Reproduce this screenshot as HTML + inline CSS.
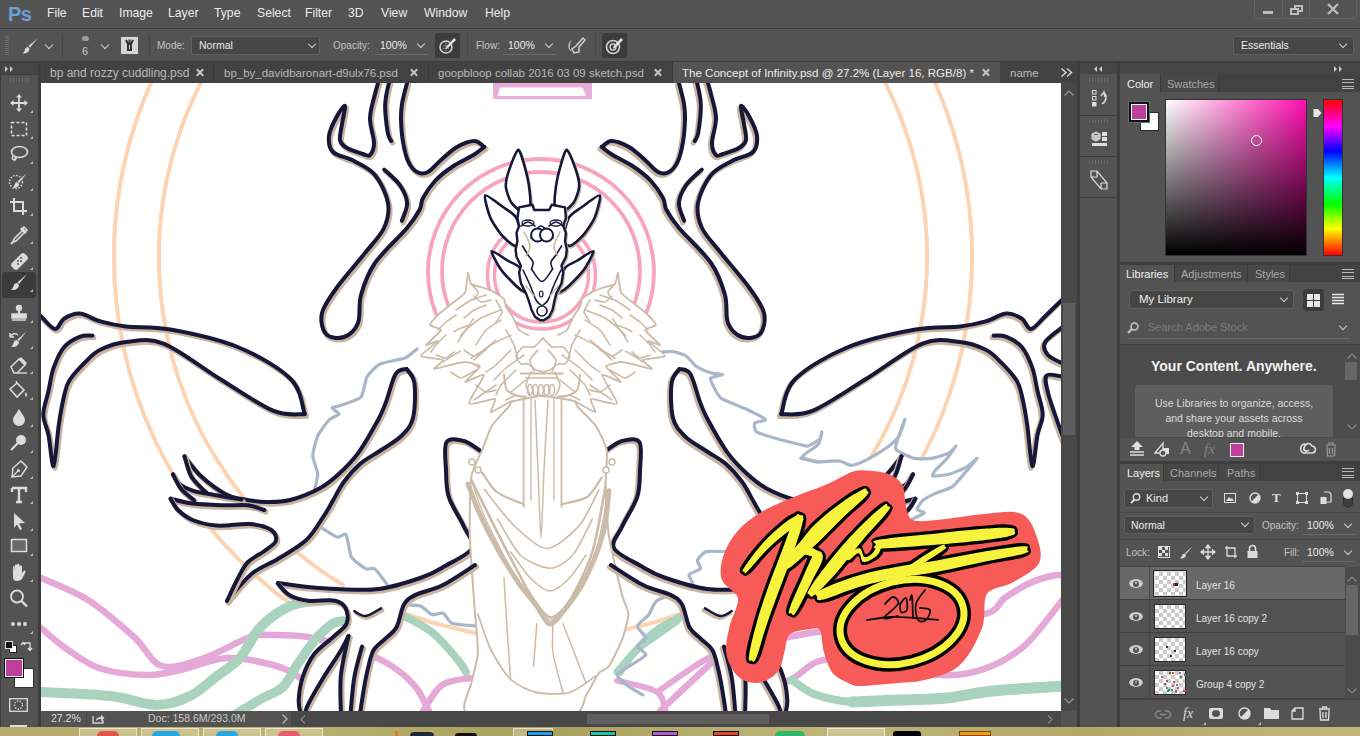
<!DOCTYPE html>
<html><head><meta charset="utf-8">
<style>
*{box-sizing:border-box;margin:0;padding:0}
html,body{width:1360px;height:736px;overflow:hidden;background:#535353;font-family:"Liberation Sans",sans-serif;color:#ddd}
.a{position:absolute}
.t{position:absolute;white-space:nowrap;font-size:12px;line-height:14px}
.menu{font-size:12.2px;color:#ececec;top:6px}
.lbl{position:absolute;white-space:nowrap;font-size:10px;line-height:12px;color:#c4c4c4}
.dd{position:absolute;background:#464646;border:1px solid #5f5f5f;border-radius:2px}
.chev{position:absolute;width:6px;height:6px;border-right:1px solid #cfcfcf;border-bottom:1px solid #cfcfcf;transform:rotate(45deg)}
.tab{position:absolute;top:66px;white-space:nowrap;font-size:11.5px;line-height:14px;color:#b9b9b9}
.x{position:absolute;top:69px;width:7px;height:7px}
.x:before,.x:after{content:"";position:absolute;left:2.5px;top:-1px;width:2px;height:9px;background:#c4c4c4;transform:rotate(45deg)}
.x:after{transform:rotate(-45deg)}
.ptab{position:absolute;white-space:nowrap;font-size:11px;line-height:14px;color:#a8a8a8}
.ham{position:absolute;width:12px;height:10px;border-top:1.5px solid #bbb;border-bottom:1.5px solid #bbb}
.ham:before{content:"";position:absolute;left:0;right:0;top:2px;height:3px;border-top:1.5px solid #bbb;border-bottom:1.5px solid #bbb}
.row{position:absolute;left:1120px;width:225px;height:33px;border-bottom:1px solid #3f3f3f;background:#535353}
.eyec{position:absolute;left:0;top:0;width:30px;height:32px;border-right:1px solid #454545}
.eye{position:absolute;left:9px;top:12px;width:14px;height:9px;border-radius:50%/50%;background:#d0d0d0;clip-path:ellipse(7px 4.5px at 50% 50%)}
.eye:after{content:"";position:absolute;left:4px;top:1.5px;width:6px;height:6px;border-radius:50%;background:#535353}
.eye:before{content:"";position:absolute;left:6px;top:2.5px;width:2px;height:2px;border-radius:50%;background:#d0d0d0;z-index:2}
.thumb{position:absolute;left:34px;top:4px;width:32px;height:25px;border:1px solid #2a2a2a;
background-color:#fff;background-image:linear-gradient(45deg,#cbcbcb 25%,transparent 25%,transparent 75%,#cbcbcb 75%),linear-gradient(45deg,#cbcbcb 25%,transparent 25%,transparent 75%,#cbcbcb 75%);background-size:8px 8px;background-position:0 0,4px 4px}
.lname{position:absolute;left:76px;top:13px;font-size:10px;line-height:12px;color:#e4e4e4;white-space:nowrap}
.grip{position:absolute;height:6px;background:repeating-linear-gradient(90deg,#6a6a6a 0 1px,transparent 1px 3px)}
.tri{position:absolute;width:0;height:0;border-left:3px solid transparent;border-bottom:3px solid #bbb}
svg.i{position:absolute;overflow:visible}
</style></head><body>

<!-- ================= MENU BAR ================= -->
<div class="t" style="left:8px;top:3px;font-size:20px;line-height:22px;font-weight:bold;color:#6aa1d8;letter-spacing:-0.5px">Ps</div>
<div class="t menu" style="left:47px">File</div>
<div class="t menu" style="left:82px">Edit</div>
<div class="t menu" style="left:119px">Image</div>
<div class="t menu" style="left:168px">Layer</div>
<div class="t menu" style="left:214px">Type</div>
<div class="t menu" style="left:257px">Select</div>
<div class="t menu" style="left:305px">Filter</div>
<div class="t menu" style="left:348px">3D</div>
<div class="t menu" style="left:381px">View</div>
<div class="t menu" style="left:424px">Window</div>
<div class="t menu" style="left:485px">Help</div>
<div class="a" style="left:1254px;top:-4px;width:103px;height:23px;border:1px solid #626262;border-radius:4px"></div>
<div class="a" style="left:1282px;top:0;width:1px;height:18px;background:#626262"></div>
<div class="a" style="left:1309px;top:0;width:1px;height:18px;background:#626262"></div>
<div class="a" style="left:1263px;top:11px;width:10px;height:3px;background:#bcbcbc"></div>
<div class="a" style="left:1294px;top:5px;width:9px;height:7px;border:2px solid #bcbcbc"></div>
<div class="a" style="left:1290px;top:8px;width:9px;height:7px;border:2px solid #bcbcbc;background:#535353"></div>
<svg class="i" style="left:1327px;top:4px" width="12" height="10"><path d="M1 0 L11 10 M11 0 L1 10" stroke="#bcbcbc" stroke-width="2.4"/></svg>

<!-- ================= OPTIONS BAR ================= -->
<div class="a" style="left:0;top:28px;width:1360px;height:1px;background:#3c3c3c"></div>
<div class="a" style="left:1px;top:29px;width:1359px;height:33px;background:#535353;border-top:1px solid #5c5c5c"></div>
<div class="a" style="left:0;top:61px;width:1360px;height:1px;background:#3c3c3c"></div>
<div class="grip" style="left:5px;top:36px;width:4px;height:19px;background:repeating-linear-gradient(180deg,#6b6b6b 0 1px,transparent 1px 2px)"></div>
<svg class="i" style="left:21px;top:37px" width="18" height="18"><path d="M16.5 1.5 L9 10.5 L7.5 9 Z" fill="#dcdcdc"/><path d="M7 10 C4.5 10 4 12.5 3.5 14 C3 15.5 2 16 1.5 16.5 C4 17 7.5 16 8.5 12 Z" fill="#dcdcdc"/></svg>
<div class="chev" style="left:46px;top:42px"></div>
<div class="a" style="left:62px;top:34px;width:1px;height:24px;background:#474747"></div>
<div class="a" style="left:82px;top:36px;width:7px;height:5px;border-radius:3px;background:#9a9a9a"></div>
<div class="t" style="left:82px;top:45px;font-size:11px;line-height:12px;color:#c8c8c8">6</div>
<div class="chev" style="left:102px;top:42px"></div>
<div class="a" style="left:121px;top:37px;width:17px;height:17px;background:#d6d6d6"></div>
<svg class="i" style="left:121px;top:37px" width="17" height="17"><path d="M7 6 L7 13 L10 13 L10 6 M5 3 L7.5 8 M12 3 L9.5 8 M8.5 2.5 L8.5 8" stroke="#333" stroke-width="2" fill="none"/></svg>
<div class="a" style="left:149px;top:35px;width:1px;height:22px;background:#474747"></div>
<div class="lbl" style="left:157px;top:40px">Mode:</div>
<div class="dd" style="left:191px;top:36px;width:129px;height:19px"></div>
<div class="t" style="left:199px;top:39px;font-size:10.5px;line-height:12px;color:#e8e8e8">Normal</div>
<div class="chev" style="left:309px;top:41px"></div>
<div class="lbl" style="left:333px;top:40px">Opacity:</div>
<div class="t" style="left:380px;top:39px;font-size:10.5px;line-height:12px;color:#ececec">100%</div>
<div class="a" style="left:375px;top:54px;width:53px;height:1px;background:#6a6a6a"></div>
<div class="chev" style="left:418px;top:41px"></div>
<div class="a" style="left:435px;top:33px;width:25px;height:25px;background:#3c3c3c;border-radius:2px"></div>
<svg class="i" style="left:438px;top:36px" width="19" height="19"><circle cx="8" cy="11" r="6" stroke="#d0d0d0" stroke-width="1.6" fill="none"/><path d="M5 10 L11 10 M5 12.5 L11 12.5 M8 6 L8 16" stroke="#999" stroke-width="0.8"/><path d="M16 2 L18 4 L10 12 L8 12.5 L8.5 10.5 Z" fill="#e0e0e0"/></svg>
<div class="a" style="left:467px;top:34px;width:1px;height:23px;background:#474747"></div>
<div class="lbl" style="left:476px;top:40px">Flow:</div>
<div class="t" style="left:508px;top:39px;font-size:10.5px;line-height:12px;color:#ececec">100%</div>
<div class="a" style="left:503px;top:54px;width:53px;height:1px;background:#6a6a6a"></div>
<div class="chev" style="left:546px;top:41px"></div>
<svg class="i" style="left:566px;top:37px" width="20" height="18"><path d="M6 3 C1 5 1 13 6 15 C3 12 3 6 6 3Z" fill="#bdbdbd"/><path d="M17 1 L19 3 L13 10 L13 15 L8 16 L6 12 L10 9 Z" stroke="#d0d0d0" stroke-width="1.5" fill="none"/></svg>
<div class="a" style="left:595px;top:34px;width:1px;height:23px;background:#474747"></div>
<div class="a" style="left:602px;top:33px;width:25px;height:25px;background:#3c3c3c;border-radius:2px"></div>
<svg class="i" style="left:605px;top:36px" width="19" height="19"><circle cx="8" cy="11" r="6.5" stroke="#d0d0d0" stroke-width="1.6" fill="none"/><circle cx="8" cy="11" r="3" stroke="#d0d0d0" stroke-width="1.4" fill="none"/><path d="M16 2 L18 4 L10 12 L8 12.5 L8.5 10.5 Z" fill="#e0e0e0"/></svg>
<div class="dd" style="left:1233px;top:36px;width:121px;height:19px"></div>
<div class="t" style="left:1241px;top:39px;font-size:10.5px;line-height:12px;color:#ececec">Essentials</div>
<div class="chev" style="left:1340px;top:41px"></div>

<!-- ================= LEFT TOOLBAR ================= -->
<div class="a" style="left:0;top:62px;width:41px;height:665px;background:#3d3d3d"></div>
<div class="a" style="left:1px;top:63px;width:37px;height:11px;background:#454545"></div>
<svg class="i" style="left:5px;top:66px" width="10" height="6"><path d="M0 0 L3 3 L0 6 Z M5 0 L8 3 L5 6Z" fill="#ccc"/></svg>
<div class="a" style="left:1px;top:75px;width:37px;height:652px;background:#535353"></div>
<div class="grip" style="left:10px;top:78px;width:19px;height:4px"></div>
<div class="a" style="left:2px;top:272px;width:34px;height:26px;background:#3a3a3a;border-radius:3px"></div>
<svg class="i" style="left:7px;top:93px" width="24" height="20"><path d="M12 2 V18 M4 10 H20" stroke="#dcdcdc" stroke-width="1.8"/><path d="M12 1 L9 4.5 H15Z M12 19 L9 15.5 H15Z M3 10 L6.5 7 V13Z M21 10 L17.5 7 V13Z" fill="#dcdcdc"/></svg>
<div class="tri" style="left:30px;top:110px"></div>
<svg class="i" style="left:7px;top:119px" width="24" height="20"><rect x="4.5" y="3.5" width="15" height="13" stroke="#dcdcdc" stroke-width="1.6" stroke-dasharray="3 2" fill="none"/></svg>
<div class="tri" style="left:30px;top:136px"></div>
<svg class="i" style="left:7px;top:144px" width="24" height="20"><ellipse cx="12.5" cy="8" rx="8" ry="5.5" stroke="#dcdcdc" stroke-width="1.6" fill="none"/><path d="M6 12 C4 15 7 17 9 15 C10 13 7 13 8 17" stroke="#dcdcdc" stroke-width="1.4" fill="none"/></svg>
<div class="tri" style="left:30px;top:161px"></div>
<svg class="i" style="left:7px;top:171px" width="24" height="20"><circle cx="9" cy="11" r="6.5" stroke="#dcdcdc" stroke-width="1.4" stroke-dasharray="1.5 1.5" fill="none"/><path d="M20 2 L12 12 L10.5 10.5Z" fill="#dcdcdc"/><path d="M10 11 C7 12 8 15 6 17 C10 17 12 15 12 13Z" fill="#dcdcdc"/></svg>
<div class="tri" style="left:30px;top:188px"></div>
<svg class="i" style="left:7px;top:196px" width="24" height="20"><path d="M7 2 V15 H20 M3 6 H16 V19" stroke="#dcdcdc" stroke-width="2" fill="none"/></svg>
<div class="tri" style="left:30px;top:213px"></div>
<svg class="i" style="left:7px;top:224px" width="24" height="20"><path d="M17 3 L20 6 L17 9 L9 17 L6 18 L7 15 L15 7Z" stroke="#dcdcdc" stroke-width="1.6" fill="none"/><path d="M15 3 L20 8 L18 10 L13 5Z" fill="#dcdcdc"/><path d="M6 18 L4 20" stroke="#dcdcdc" stroke-width="1.8"/></svg>
<div class="tri" style="left:30px;top:241px"></div>
<svg class="i" style="left:7px;top:250px" width="24" height="20"><path d="M5 13 L14 4 Q16 2 18 4 L20 6 Q22 8 20 10 L11 19 Q9 21 7 19 L5 17 Q3 15 5 13Z" fill="#dcdcdc"/><circle cx="11" cy="11" r="1" fill="#535353"/><circle cx="14" cy="11" r="1" fill="#535353"/><circle cx="11" cy="14" r="1" fill="#535353"/><circle cx="14" cy="8" r="1" fill="#535353"/></svg>
<div class="tri" style="left:30px;top:267px"></div>
<svg class="i" style="left:7px;top:272px" width="24" height="20"><path d="M20 2 L12 12 L10.5 10.5Z" fill="#dcdcdc"/><path d="M10 11 C6 11 7 16 4 18 C9 18.5 12 16 12 13Z" fill="#dcdcdc"/></svg>
<div class="tri" style="left:30px;top:289px"></div>
<svg class="i" style="left:7px;top:303px" width="24" height="20"><circle cx="12" cy="5" r="3.2" fill="#dcdcdc"/><path d="M11 7 V11 H13 V7" fill="#dcdcdc"/><path d="M5 11 H19 V15 H5Z M5 17 H19" stroke="#dcdcdc" stroke-width="1.6" fill="#dcdcdc"/></svg>
<div class="tri" style="left:30px;top:320px"></div>
<svg class="i" style="left:7px;top:329px" width="24" height="20"><path d="M20 2 L12 12 L10.5 10.5Z" fill="#dcdcdc"/><path d="M10 11 C6 11 7 16 4 18 C9 18.5 12 16 12 13Z" fill="#dcdcdc"/><path d="M3 8 C5 4 9 4 11 6 M3 8 L3 4 M3 8 L7 8" stroke="#dcdcdc" stroke-width="1.4" fill="none"/></svg>
<div class="tri" style="left:30px;top:346px"></div>
<svg class="i" style="left:7px;top:354px" width="24" height="20"><path d="M4 13 L12 5 L18 11 L10 19 L7 19Z" stroke="#dcdcdc" stroke-width="1.5" fill="none"/><path d="M12 5 L14 3 L20 9 L18 11Z" fill="#dcdcdc"/><path d="M10 19 H20" stroke="#dcdcdc" stroke-width="1.4"/></svg>
<div class="tri" style="left:30px;top:371px"></div>
<svg class="i" style="left:7px;top:380px" width="24" height="20"><path d="M3 9 L10 3 L17 10 L10 17Z" stroke="#dcdcdc" stroke-width="1.6" fill="none"/><path d="M10 3 L9 1" stroke="#dcdcdc" stroke-width="1.4"/><path d="M19 12 Q21 15 19 17 Q17 15 19 12Z" fill="#dcdcdc"/></svg>
<div class="tri" style="left:30px;top:397px"></div>
<svg class="i" style="left:7px;top:407px" width="24" height="20"><path d="M12 2 C9 7 6 10 6 13 A6 6 0 0 0 18 13 C18 10 15 7 12 2Z" fill="#dcdcdc"/></svg>
<div class="tri" style="left:30px;top:424px"></div>
<svg class="i" style="left:7px;top:433px" width="24" height="20"><circle cx="14" cy="7" r="5" fill="#dcdcdc"/><path d="M11 10 L4 17" stroke="#dcdcdc" stroke-width="2.2"/></svg>
<div class="tri" style="left:30px;top:450px"></div>
<svg class="i" style="left:7px;top:459px" width="24" height="20"><path d="M14 2 L20 8 L14 17 L5 18 L6 9Z" stroke="#dcdcdc" stroke-width="1.5" fill="none"/><path d="M5 18 L11 12" stroke="#dcdcdc" stroke-width="1.2"/><circle cx="11.5" cy="11.5" r="1.5" fill="#dcdcdc"/></svg>
<div class="tri" style="left:30px;top:476px"></div>
<svg class="i" style="left:7px;top:484px" width="24" height="20"><path d="M5 4 H19 V8 M5 4 V8 M12 4 V18 M9 18 H15" stroke="#dcdcdc" stroke-width="2.4" fill="none"/></svg>
<div class="tri" style="left:30px;top:501px"></div>
<svg class="i" style="left:7px;top:511px" width="24" height="20"><path d="M7 2 L18 12 L12 12.5 L15 18 L13 19 L10 13.5 L7 17Z" fill="#dcdcdc"/></svg>
<div class="tri" style="left:30px;top:528px"></div>
<svg class="i" style="left:7px;top:536px" width="24" height="20"><rect x="4.5" y="3.5" width="15" height="12" stroke="#dcdcdc" stroke-width="1.5" fill="#6a6a6a"/></svg>
<div class="tri" style="left:30px;top:553px"></div>
<svg class="i" style="left:7px;top:562px" width="24" height="20"><path d="M6 10 V5 Q6 3.5 7.5 4 L8 9 V3 Q9 1.5 10 3 V9 V2.5 Q11.5 1 12.5 2.5 V9 V4 Q14 3 15 4 V11 L17 8.5 Q19 8 18.5 10 L15 17 Q13 19 10 19 Q6 19 6 15Z" fill="#dcdcdc"/></svg>
<div class="tri" style="left:30px;top:579px"></div>
<svg class="i" style="left:7px;top:588px" width="24" height="20"><circle cx="10" cy="8.5" r="6" stroke="#dcdcdc" stroke-width="1.8" fill="none"/><path d="M14.5 13 L20 18.5" stroke="#dcdcdc" stroke-width="2.4"/></svg>
<svg class="i" style="left:7px;top:614px" width="24" height="20"><circle cx="6" cy="10" r="2" fill="#dcdcdc"/><circle cx="12" cy="10" r="2" fill="#dcdcdc"/><circle cx="18" cy="10" r="2" fill="#dcdcdc"/></svg>
<div class="tri" style="left:30px;top:631px"></div>
<div class="a" style="left:9px;top:645px;width:8px;height:8px;background:#fff;border:1px solid #222"></div>
<div class="a" style="left:5px;top:641px;width:8px;height:8px;background:#111;border:1px solid #ddd"></div>
<svg class="i" style="left:20px;top:640px" width="13" height="12"><path d="M3 3 H10 V10 M1 5 L3 2.5 L5 5 M8 8 L10 10.5 L12 8" stroke="#ddd" stroke-width="1.3" fill="none"/></svg>
<div class="a" style="left:14px;top:668px;width:20px;height:20px;background:#fff;border:1px solid #333"></div>
<div class="a" style="left:4px;top:658px;width:20px;height:20px;background:#111;padding:1px"><div style="width:18px;height:18px;background:#bb3f9b;border:1px solid #eee"></div></div>
<svg class="i" style="left:9px;top:698px" width="19" height="14"><rect x="0.7" y="0.7" width="17.6" height="12.6" stroke="#ddd" stroke-width="1.3" fill="none"/><circle cx="9.5" cy="7" r="4" stroke="#ddd" stroke-width="1.3" stroke-dasharray="1.4 1.4" fill="none"/></svg>
<div class="a" style="left:10px;top:725px;width:17px;height:3px;background:#ddd"></div>

<!-- ================= DOCUMENT TABS ================= -->
<div class="a" style="left:41px;top:62px;width:1036px;height:21px;background:#424242"></div>
<div class="a" style="left:213px;top:62px;width:1px;height:21px;background:#393939"></div>
<div class="a" style="left:428px;top:62px;width:1px;height:21px;background:#393939"></div>
<div class="a" style="left:672px;top:62px;width:1px;height:21px;background:#393939"></div>
<div class="a" style="left:673px;top:62px;width:327px;height:21px;background:#535353"></div>
<div class="a" style="left:1040px;top:62px;width:37px;height:21px;background:#424242"></div>
<div class="tab" style="left:50px;font-size:12px">bp and rozzy cuddling.psd</div><div class="x" style="left:196px"></div>
<div class="tab" style="left:224px">bp_by_davidbaronart-d9ulx76.psd</div><div class="x" style="left:410px"></div>
<div class="tab" style="left:438px">goopbloop collab 2016 03 09 sketch.psd</div><div class="x" style="left:654px"></div>
<div class="tab" style="left:682px;color:#ededed;font-size:11.55px">The Concept of Infinity.psd @ 27.2% (Layer 16, RGB/8) *</div><div class="x" style="left:982px"></div>
<div class="a" style="left:1001px;top:62px;width:39px;height:21px;overflow:hidden"><div class="tab" style="left:9px;top:4px">name</div></div>
<svg class="i" style="left:1061px;top:68px" width="12" height="9"><path d="M0.5 0.5 L5 4.5 L0.5 8.5 M6 0.5 L10.5 4.5 L6 8.5" stroke="#d8d8d8" stroke-width="1.4" fill="none"/></svg>

<!-- ================= CANVAS ================= -->
<div class="a" style="left:41px;top:83px;width:1020px;height:628px;background:#fff;overflow:hidden">
<svg id="art" width="1020" height="628" viewBox="41 83 1020 628" style="position:absolute;left:0;top:0" stroke-linecap="round" stroke-linejoin="round">
<path d="M292 605 A429 429 0 1 1 794 605" stroke="#fdd4b3" stroke-width="4" fill="none"/>
<path d="M343 585 A384 384 0 1 1 743 585" stroke="#fdd4b3" stroke-width="4" fill="none"/>
<path d="M400 612 L430 622 L462 630 L475 633" stroke="#fdd4b3" stroke-width="4" fill="none"/>
<path d="M686 612 L656 622 L624 630 L611 633" stroke="#fdd4b3" stroke-width="4" fill="none"/>
<rect x="493" y="80" width="99" height="19" fill="#e8acdb"/>
<path d="M500 87.5 L582.5 87.5 L586 96 L497.5 96Z" stroke="none" stroke-width="0" fill="#fff"/>
<circle cx="541" cy="272" r="113" stroke="#f8a4be" stroke-width="3.8" fill="none"/>
<circle cx="541" cy="271" r="99" stroke="#f8a4be" stroke-width="3.8" fill="none"/>
<circle cx="541.5" cy="275" r="54" stroke="#f8a4be" stroke-width="3.5" fill="none"/>
<circle cx="541.5" cy="275" r="47" stroke="#f8a4be" stroke-width="3.5" fill="none"/>
<path d="M41 578 C48.8 581.7 72.5 590.2 88 600 C103.5 609.8 121.7 626 134 637 C146.3 648 150.3 662.5 162 666 C173.7 669.5 189.3 662.8 204 658 C218.7 653.2 238.5 640.8 250 637 C261.5 633.2 263.3 635 273 635 C282.7 635 295.7 635 308 637 C320.3 639 334.2 642.8 347 647 C359.8 651.2 373.8 655.7 385 662 C396.2 668.3 406.7 676.8 414 685 C421.3 693.2 426.5 706.7 429 711" stroke="#e5a9d9" stroke-width="6.5" fill="none"/>
<path d="M41 628 C44.8 631.2 54.3 640.3 64 647 C73.7 653.7 85.3 663.3 99 668 C112.7 672.7 132.5 674.7 146 675 C159.5 675.3 166.5 672.8 180 670 C193.5 667.2 211.5 658.8 227 658 C242.5 657.2 261 661.8 273 665 C285 668.2 290 671.2 299 677 C308 682.8 321 694.3 327 700 C333 705.7 333.7 709.2 335 711" stroke="#e5a9d9" stroke-width="6.5" fill="none"/>
<path d="M423 711 C426.2 706.7 434.2 690.5 442 685 C449.8 679.5 465.3 679.2 470 678" stroke="#e5a9d9" stroke-width="6.5" fill="none"/>
<path d="M660 711 C667.7 703.8 695 677.8 706 668 C717 658.2 717 656.5 726 652 C735 647.5 749.5 643.5 760 641 C770.5 638.5 778.8 638.6 789 637 C799.2 635.4 802.5 633.6 821 631.6 C839.5 629.6 872.9 627.9 900 625 C927.1 622.1 966.2 618.8 983.6 614.3 C1001 609.8 997.2 603 1004.6 598 C1012 593 1020.1 587.7 1027.8 584 C1035.5 580.3 1045 577.5 1051 576 C1057 574.5 1061.8 575.2 1064 575" stroke="#e5a9d9" stroke-width="6.5" fill="none"/>
<path d="M745 698 C752.5 695 776.8 686.3 790 680 C803.2 673.7 809 662 824 660 C839 658 863.5 665.7 880 668 C896.5 670.3 910.2 672.5 923.2 673.6 C936.2 674.7 946.4 676.1 958 674.8 C969.6 673.4 982.2 670.1 993 665.5 C1003.8 660.9 1014.5 654 1023 647 C1031.5 640 1037.2 631.8 1044 623.6 C1050.8 615.4 1060.7 602.3 1064 598" stroke="#e5a9d9" stroke-width="6.5" fill="none"/>
<path d="M41 692 C52.7 692.7 91.7 693.8 111 696 C130.3 698.2 143.8 705 157 705 C170.2 705 180 700.8 190 696 C200 691.2 208.7 682.3 217 676 C225.3 669.7 233.2 665.7 240 658 C246.8 650.3 251.5 637.7 258 630 C264.5 622.3 272 616.5 279 612 C286 607.5 291.7 605 300 603 C308.3 601 324.2 600.5 329 600" stroke="#a9d2bf" stroke-width="10" fill="none"/>
<path d="M236 714 C240.2 711.5 253.2 703.5 261 699 C268.8 694.5 277 692.7 283 687 C289 681.3 291.7 672.8 297 665 C302.3 657.2 309.2 646.8 315 640 C320.8 633.2 327.3 627.2 332 624 C336.7 620.8 341.2 621.5 343 621" stroke="#a9d2bf" stroke-width="9.5" fill="none"/>
<path d="M395 614 C396.5 614.3 397.7 612.8 404 616 C410.3 619.2 424 625.7 433 633 C442 640.3 452.5 653.5 458 660 C463.5 666.5 464.7 670 466 672" stroke="#a9d2bf" stroke-width="8" fill="none"/>
<path d="M691 614 C689.5 614.3 688.3 612.8 682 616 C675.7 619.2 662 625.7 653 633 C644 640.3 633.5 653.5 628 660 C622.5 666.5 621.3 670 620 672" stroke="#a9d2bf" stroke-width="7.5" fill="none"/>
<path d="M792 680 C795.7 682.3 804 690.3 814 694 C824 697.7 837.7 701 852 702 C866.3 703 892 700.3 900 700" stroke="#a9d2bf" stroke-width="8" fill="none"/>
<path d="M852 702 C860 701.7 884.2 700.7 900 700 C915.8 699.3 931 699.5 946.5 698 C962 696.5 973.4 693 993 691 C1012.6 689 1052.2 686.8 1064 686" stroke="#a9d2bf" stroke-width="11" fill="none"/>
<path d="M677.5 620.5 C674.1 622.9 664.1 630 657.4 634.8 C650.7 639.6 644 643 637.3 649.2 C630.6 655.4 620.6 668.2 617.2 672" stroke="#a9d2bf" stroke-width="7.5" fill="none"/>
<path d="M617.2 680.7 C623.9 682.6 649.3 686.7 657.4 692.2 C665.5 697.8 664.6 710.4 666 714" stroke="#e5a9d9" stroke-width="6" fill="none"/>
<path d="M657.4 692 C662.2 688.7 677.4 677.7 686 672 C694.6 666.3 702.3 661.1 709 657.8 C715.7 654.5 723.2 653 726 652" stroke="#e5a9d9" stroke-width="6" fill="none"/>
<path d="M799 444.2 L807.7 446 L820 438.9 L821.8 431.8 L818.3 444.2 L802.4 456.5 L816.5 461.8 L839.5 461 L851.8 465.4 L869.5 458.3 L889 446 L899.5 435.3 L904.8 419.4 L897.8 438.9 L896 449.5 L913.7 458.3 L931.3 458.3 L949 453 L956 446 L947.2 458.3 L935 470.7 L933 476 L949 474.2 L966.7 467 L977.3 458.3 L966.7 470.7 L952.5 486.6 L934.9 493.6 L922.5 500.7 L917.2 509.5 L924.3 513 L910 520 L980 540 L800 540Z" stroke="none" stroke-width="0" fill="#fff"/>
<path d="M417 349 C415.8 349.9 408.7 356.5 405 358 C401.3 359.5 383.8 362.1 380 364 C376.2 365.9 368.9 373.7 367 377 C365.1 380.3 363.5 394.2 361 397 C358.5 399.8 344.9 403.9 342 405 C339.1 406.1 332.3 407.1 332 408 C331.7 408.9 339.3 412.8 339 414 C338.7 415.2 331.1 417.8 329 420 C326.9 422.2 319.3 432.4 317.7 436 C316.1 439.6 312.8 452.2 312.8 456 C312.8 459.8 317.5 470.4 317.7 473.8 C317.9 477.2 314.8 488.4 314.5 490" stroke="#a9b6c9" stroke-width="3.2" fill="none"/>
<path d="M323 528.7 C324.4 529.6 335 536.6 337.3 537.2 C339.6 537.8 344.6 532.4 346 534.4 C347.4 536.4 349.6 553.9 351.6 557.3 C353.6 560.7 363.7 567.6 366 568.8 C368.3 569.9 372.6 567.4 374.6 568.8 C376.6 570.2 383.5 579.6 386 583 C388.5 586.4 396.6 600.7 400 603 C403.4 605.3 417.2 604.8 420.4 606 C423.6 607.2 429.6 613.9 431.9 614.6 C434.2 615.3 441.3 612.3 443.3 613.2 C445.3 614.1 448.7 621.9 452 623.2 C455.3 624.5 473.6 625.7 476 626" stroke="#a9b6c9" stroke-width="3.2" fill="none"/>
<path d="M648.8 353.3 C651.1 353.1 668.1 351.2 671.8 351.5 C675.5 351.8 683.5 354.5 686 356 C688.5 357.5 694 364.8 696.5 366.5 C699 368.2 708.1 371.9 710.7 372.7 C713.4 373.5 723 374 723 374.5 C723 375 711.6 376.7 710.7 378 C709.8 379.3 713.1 385.7 714.2 387.7 C715.3 389.7 718.1 396.2 721.3 398.3 C724.5 400.4 741.6 406.9 746 409 C750.4 411.1 764.5 418.1 765.4 419.5 C766.3 420.9 755.7 421.8 754.8 423 C753.9 424.2 754.3 430.3 756.6 431.9 C758.9 433.5 773.6 437.8 777.8 439 C782 440.2 796 443.5 799 444.2 C802 444.9 805.6 446.5 807.7 446 C809.8 445.5 818.6 440.3 820 438.9 C821.4 437.5 822 431.3 821.8 431.8 C821.6 432.3 820.2 441.7 818.3 444.2 C816.4 446.7 802.6 454.7 802.4 456.5 C802.2 458.3 812.8 461.4 816.5 461.8 C820.2 462.2 836 460.6 839.5 461 C843 461.4 848.8 465.7 851.8 465.4 C854.8 465.1 865.8 460.2 869.5 458.3 C873.2 456.4 886 448.3 889 446 C892 443.7 897.9 438 899.5 435.3 C901.1 432.6 905 419 904.8 419.4 C904.6 419.8 898.7 435.9 897.8 438.9 C896.9 441.9 894.4 447.6 896 449.5 C897.6 451.4 910.2 457.4 913.7 458.3 C917.2 459.2 927.8 458.8 931.3 458.3 C934.8 457.8 946.5 454.2 949 453 C951.5 451.8 956.2 445.5 956 446 C955.8 446.5 949.3 455.8 947.2 458.3 C945.1 460.8 936.4 468.9 935 470.7 C933.6 472.5 931.6 475.6 933 476 C934.4 476.4 945.6 475.1 949 474.2 C952.4 473.3 963.9 468.6 966.7 467 C969.5 465.4 977.3 457.9 977.3 458.3 C977.3 458.7 969.2 467.9 966.7 470.7 C964.2 473.5 955.7 484.3 952.5 486.6 C949.3 488.9 937.9 492.2 934.9 493.6 C931.9 495 924.3 499.1 922.5 500.7 C920.7 502.3 917 508.3 917.2 509.5 C917.4 510.7 925 511.9 924.3 513 C923.6 514 911.4 519.3 910 520" stroke="#a9b6c9" stroke-width="3.2" fill="none"/>
<path d="M726.2 551.6 C724.2 551.6 708.9 550.7 706 551.6 C703.1 552.5 698.1 558.5 697.5 560.2 C696.9 561.9 701.2 567.4 700.4 568.8 C699.5 570.2 689.9 572.9 689 574.6 C688.1 576.3 695 583.4 691.8 586 C688.6 588.6 661.7 597.5 657.4 600.4 C653.1 603.3 650.8 612.1 648.8 614.7 C646.8 617.3 637.6 623.9 637.3 626.2 C637 628.5 645.9 635.7 645.9 637.7 C645.9 639.7 637.3 644.6 637.3 646.3 C637.3 648 646.8 652.9 645.9 654.9 C645 656.9 631.6 664.4 628.7 666.4 C625.8 668.4 617.2 673 617.2 675 C617.2 677 626.1 684.5 628.7 686.5 C631.3 688.5 641.6 694.1 643 695" stroke="#a9b6c9" stroke-width="3.2" fill="none"/>
<path d="M800.8 458.4 L820 462" stroke="#a9b6c9" stroke-width="3.2" fill="none"/>
<path d="M541 336 L558 335 L567 330 L573.5 316.5 L580 306.7 L582 299 L591 292.6 L602 288 L615 284 L618 273 L621 292.6 L634 303.5 L647 314 L656 325 L645 330 L660 345 L648 341 L665 356 L643 360 L652 369 L632 364 L621 362 L606 366.5 L621 382 L602 375 L617 403.5 L591 399 L595 412 L573.5 401 L560 405 L541 400 L541 440Z" stroke="none" stroke-width="0" fill="#fff"/>
<path d="M558 335 C558.8 334.6 565.7 331.5 567 330 C568.3 328.5 572.4 318.4 573.5 316.5 C574.6 314.6 579.3 308.2 580 306.7 C580.7 305.2 581.1 300.2 582 299 C582.9 297.8 589.3 293.5 591 292.6 C592.7 291.7 600 288.7 602 288 C604 287.3 613.7 285.2 615 284 C616.3 282.8 617.5 272.3 618 273 C618.5 273.7 619.7 290.1 621 292.6 C622.3 295.1 631.8 301.7 634 303.5 C636.2 305.3 645.2 312.2 647 314 C648.8 315.8 656.2 323.7 656 325 C655.8 326.3 644.7 328.3 645 330 C645.3 331.7 659.8 344.1 660 345 C660.2 345.9 647.6 340.1 648 341 C648.4 341.9 665.4 354.4 665 356 C664.6 357.6 644.1 358.9 643 360 C641.9 361.1 652.9 368.7 652 369 C651.1 369.3 634.6 364.6 632 364 C629.4 363.4 623.2 361.8 621 362 C618.8 362.2 606 364.8 606 366.5 C606 368.2 621.3 381.3 621 382 C620.7 382.7 602.3 373.2 602 375 C601.7 376.8 617.9 401.5 617 403.5 C616.1 405.5 592.8 398.3 591 399 C589.2 399.7 596.5 411.8 595 412 C593.5 412.2 576.4 401.6 573.5 401 C570.6 400.4 561.1 404.7 560 405" stroke="#cbbba8" stroke-width="1.8" fill="none"/>
<path d="M545 336 L528 335 L519 330 L512.5 316.5 L506 306.7 L504 299 L495 292.6 L484 288 L471 284 L468 273 L465 292.6 L452 303.5 L439 314 L430 325 L441 330 L426 345 L438 341 L421 356 L443 360 L434 369 L454 364 L465 362 L480 366.5 L465 382 L484 375 L469 403.5 L495 399 L491 412 L512.5 401 L526 405 L545 400 L541 440Z" stroke="none" stroke-width="0" fill="#fff"/>
<path d="M528 335 C527.2 334.6 520.3 331.5 519 330 C517.7 328.5 513.6 318.4 512.5 316.5 C511.4 314.6 506.7 308.2 506 306.7 C505.3 305.2 504.9 300.2 504 299 C503.1 297.8 496.7 293.5 495 292.6 C493.3 291.7 486 288.7 484 288 C482 287.3 472.3 285.2 471 284 C469.7 282.8 468.5 272.3 468 273 C467.5 273.7 466.3 290.1 465 292.6 C463.7 295.1 454.2 301.7 452 303.5 C449.8 305.3 440.8 312.2 439 314 C437.2 315.8 429.8 323.7 430 325 C430.2 326.3 441.3 328.3 441 330 C440.7 331.7 426.2 344.1 426 345 C425.8 345.9 438.4 340.1 438 341 C437.6 341.9 420.6 354.4 421 356 C421.4 357.6 441.9 358.9 443 360 C444.1 361.1 433.1 368.7 434 369 C434.9 369.3 451.4 364.6 454 364 C456.6 363.4 462.8 361.8 465 362 C467.2 362.2 480 364.8 480 366.5 C480 368.2 464.7 381.3 465 382 C465.3 382.7 483.7 373.2 484 375 C484.3 376.8 468.1 401.5 469 403.5 C469.9 405.5 493.2 398.3 495 399 C496.8 399.7 489.5 411.8 491 412 C492.5 412.2 509.6 401.6 512.5 401 C515.4 400.4 524.9 404.7 526 405" stroke="#cbbba8" stroke-width="1.8" fill="none"/>
<path d="M612.6 318.7 C613.1 319.5 616.7 325.3 618 327 C619.3 328.7 624.9 335.1 625.7 336" stroke="#cbbba8" stroke-width="1.6" fill="none"/>
<path d="M473.4 318.7 C472.9 319.5 469.3 325.3 468 327 C466.7 328.7 461.1 335.1 460.3 336" stroke="#cbbba8" stroke-width="1.6" fill="none"/>
<path d="M617 325 C617.8 325.3 623.5 327.3 625 328 C626.5 328.7 631.3 331.3 632 331.7" stroke="#cbbba8" stroke-width="1.6" fill="none"/>
<path d="M469 325 C468.2 325.3 462.5 327.3 461 328 C459.5 328.7 454.7 331.3 454 331.7" stroke="#cbbba8" stroke-width="1.6" fill="none"/>
<path d="M625.7 351.3 C626.5 351.8 632.3 354.9 634 356 C635.7 357.1 642.1 361.4 643 362" stroke="#cbbba8" stroke-width="1.6" fill="none"/>
<path d="M460.3 351.3 C459.5 351.8 453.7 354.9 452 356 C450.3 357.1 443.9 361.4 443 362" stroke="#cbbba8" stroke-width="1.6" fill="none"/>
<path d="M585 320 C586.5 321 597.5 327.5 600 330 C602.5 332.5 609 343.5 610 345" stroke="#cbbba8" stroke-width="1.6" fill="none"/>
<path d="M501 320 C499.5 321 488.5 327.5 486 330 C483.5 332.5 477 343.5 476 345" stroke="#cbbba8" stroke-width="1.6" fill="none"/>
<path d="M590 340 C591.5 341.2 602.5 350.2 605 352 C607.5 353.8 614 357.4 615 358" stroke="#cbbba8" stroke-width="1.6" fill="none"/>
<path d="M496 340 C494.5 341.2 483.5 350.2 481 352 C478.5 353.8 472 357.4 471 358" stroke="#cbbba8" stroke-width="1.6" fill="none"/>
<path d="M575 350 C576.5 351.5 587.5 362.8 590 365 C592.5 367.2 599 371.3 600 372" stroke="#cbbba8" stroke-width="1.6" fill="none"/>
<path d="M511 350 C509.5 351.5 498.5 362.8 496 365 C493.5 367.2 487 371.3 486 372" stroke="#cbbba8" stroke-width="1.6" fill="none"/>
<path d="M570 370 C571.5 371.5 583 382.5 585 385 C587 387.5 589.5 394 590 395" stroke="#cbbba8" stroke-width="1.6" fill="none"/>
<path d="M516 370 C514.5 371.5 503 382.5 501 385 C499 387.5 496.5 394 496 395" stroke="#cbbba8" stroke-width="1.6" fill="none"/>
<path d="M600 305 C601.2 305.5 609.8 308.7 612 310 C614.2 311.3 621 317.2 622 318" stroke="#cbbba8" stroke-width="1.6" fill="none"/>
<path d="M486 305 C484.8 305.5 476.2 308.7 474 310 C471.8 311.3 465 317.2 464 318" stroke="#cbbba8" stroke-width="1.6" fill="none"/>
<path d="M560 380 L575 392" stroke="#cbbba8" stroke-width="1.6" fill="none"/>
<path d="M526 380 L511 392" stroke="#cbbba8" stroke-width="1.6" fill="none"/>
<path d="M630 315 C631 315.7 638.2 320.5 640 322 C641.8 323.5 647.2 329.2 648 330" stroke="#cbbba8" stroke-width="1.6" fill="none"/>
<path d="M456 315 C455 315.7 447.8 320.5 446 322 C444.2 323.5 438.8 329.2 438 330" stroke="#cbbba8" stroke-width="1.6" fill="none"/>
<path d="M595 300 C596 300.2 603.3 302.4 605 302 C606.7 301.6 611.3 296.6 612 296" stroke="#cbbba8" stroke-width="1.6" fill="none"/>
<path d="M491 300 C490 300.2 482.7 302.4 481 302 C479.3 301.6 474.7 296.6 474 296" stroke="#cbbba8" stroke-width="1.6" fill="none"/>
<path d="M580 330 C579.2 331.5 573.2 342 572 345 C570.8 348 568.4 358.5 568 360" stroke="#cbbba8" stroke-width="1.6" fill="none"/>
<path d="M506 330 C506.8 331.5 512.8 342 514 345 C515.2 348 517.6 358.5 518 360" stroke="#cbbba8" stroke-width="1.6" fill="none"/>
<path d="M543 338 C543.9 338.9 550 346.1 552 347 C554 347.9 561.2 346.1 563 347 C564.8 347.9 569.8 354.3 570 356 C570.2 357.7 566.2 363.2 565 364 C563.8 364.8 559.5 363.4 558 364 C556.5 364.6 551.7 369.2 550 370 C548.3 370.8 541.9 371.8 541 372" stroke="#cbbba8" stroke-width="1.6" fill="none"/>
<path d="M543 338 C542.1 338.9 536 346.1 534 347 C532 347.9 524.8 346.1 523 347 C521.2 347.9 516.2 354.3 516 356 C515.8 357.7 519.8 363.2 521 364 C522.2 364.8 526.5 363.4 528 364 C529.5 364.6 534.3 369.2 536 370 C537.7 370.8 544.1 371.8 545 372" stroke="#cbbba8" stroke-width="1.6" fill="none"/>
<path d="M555 372 C555.5 373.3 559.9 382.7 560 385 C560.1 387.3 556.4 394 556 395" stroke="#cbbba8" stroke-width="1.6" fill="none"/>
<path d="M531 372 C530.5 373.3 526.1 382.7 526 385 C525.9 387.3 529.6 394 530 395" stroke="#cbbba8" stroke-width="1.6" fill="none"/>
<path d="M610 385 C609 385.7 602 391.5 600 392 C598 392.5 591 390.2 590 390" stroke="#cbbba8" stroke-width="1.6" fill="none"/>
<path d="M476 385 C477 385.7 484 391.5 486 392 C488 392.5 495 390.2 496 390" stroke="#cbbba8" stroke-width="1.6" fill="none"/>
<path d="M600 295 C601.5 295.5 612 298.5 615 300 C618 301.5 628.5 309 630 310" stroke="#cbbba8" stroke-width="1.6" fill="none"/>
<path d="M486 295 C484.5 295.5 474 298.5 471 300 C468 301.5 457.5 309 456 310" stroke="#cbbba8" stroke-width="1.6" fill="none"/>
<path d="M585 310 C587 310.8 601.5 316 605 318 C608.5 320 617.7 327.6 620 330 C622.3 332.4 627.2 340.8 628 342" stroke="#cbbba8" stroke-width="1.6" fill="none"/>
<path d="M501 310 C499 310.8 484.5 316 481 318 C477.5 320 468.3 327.6 466 330 C463.7 332.4 458.8 340.8 458 342" stroke="#cbbba8" stroke-width="1.6" fill="none"/>
<path d="M575 335 C577 336 591.3 342.5 595 345 C598.7 347.5 610.3 358.5 612 360" stroke="#cbbba8" stroke-width="1.6" fill="none"/>
<path d="M511 335 C509 336 494.7 342.5 491 345 C487.3 347.5 475.7 358.5 474 360" stroke="#cbbba8" stroke-width="1.6" fill="none"/>
<path d="M562 355 C563.8 356.3 577 365.5 580 368 C583 370.5 590.8 378.8 592 380" stroke="#cbbba8" stroke-width="1.6" fill="none"/>
<path d="M524 355 C522.2 356.3 509 365.5 506 368 C503 370.5 495.2 378.8 494 380" stroke="#cbbba8" stroke-width="1.6" fill="none"/>
<path d="M640 335 C641 336 648.5 343.3 650 345 C651.5 346.7 654.5 351.3 655 352" stroke="#cbbba8" stroke-width="1.6" fill="none"/>
<path d="M446 335 C445 336 437.5 343.3 436 345 C434.5 346.7 431.5 351.3 431 352" stroke="#cbbba8" stroke-width="1.6" fill="none"/>
<path d="M610 370 C611.5 370.8 622.5 377.8 625 378 C627.5 378.2 634 372.6 635 372" stroke="#cbbba8" stroke-width="1.6" fill="none"/>
<path d="M476 370 C474.5 370.8 463.5 377.8 461 378 C458.5 378.2 452 372.6 451 372" stroke="#cbbba8" stroke-width="1.6" fill="none"/>
<path d="M590 385 C591.5 386 602.8 393.5 605 395 C607.2 396.5 611.3 399.5 612 400" stroke="#cbbba8" stroke-width="1.6" fill="none"/>
<path d="M496 385 C494.5 386 483.2 393.5 481 395 C478.8 396.5 474.7 399.5 474 400" stroke="#cbbba8" stroke-width="1.6" fill="none"/>
<path d="M570 395 L580 400" stroke="#cbbba8" stroke-width="1.6" fill="none"/>
<path d="M516 395 L506 400" stroke="#cbbba8" stroke-width="1.6" fill="none"/>
<path d="M548 350 C548.8 351 555.6 357.8 556 360 C556.4 362.2 552.4 370.8 552 372" stroke="#cbbba8" stroke-width="1.6" fill="none"/>
<path d="M538 350 C537.2 351 530.4 357.8 530 360 C529.6 362.2 533.6 370.8 534 372" stroke="#cbbba8" stroke-width="1.6" fill="none"/>
<path d="M600 350 C601.2 350.6 609.8 356 612 356 C614.2 356 621 350.6 622 350" stroke="#cbbba8" stroke-width="1.6" fill="none"/>
<path d="M486 350 C484.8 350.6 476.2 356 474 356 C471.8 356 465 350.6 464 350" stroke="#cbbba8" stroke-width="1.6" fill="none"/>
<path d="M615 284 C614.3 284.8 608.3 290.4 608 292 C607.7 293.6 611.6 299.2 612 300" stroke="#cbbba8" stroke-width="1.6" fill="none"/>
<path d="M471 284 C471.7 284.8 477.7 290.4 478 292 C478.3 293.6 474.4 299.2 474 300" stroke="#cbbba8" stroke-width="1.6" fill="none"/>
<path d="M590 300 C589.4 301.2 584 309.8 584 312 C584 314.2 589.4 321 590 322" stroke="#cbbba8" stroke-width="1.6" fill="none"/>
<path d="M496 300 C496.6 301.2 502 309.8 502 312 C502 314.2 496.6 321 496 322" stroke="#cbbba8" stroke-width="1.6" fill="none"/>
<path d="M650 355 C649 355.3 641.8 358.3 640 358 C638.2 357.7 632.8 352.6 632 352" stroke="#cbbba8" stroke-width="1.6" fill="none"/>
<path d="M436 355 C437 355.3 444.2 358.3 446 358 C447.8 357.7 453.2 352.6 454 352" stroke="#cbbba8" stroke-width="1.6" fill="none"/>
<path d="M472 548 C467 548.2 453.4 561.1 445 566 C436.6 570.9 432.6 573.7 421.6 577.5 C410.6 581.3 393.1 587.1 379 589 C364.9 590.9 348.8 589.3 337 589 C325.2 588.7 317.9 587.9 308 587 C298.1 586.1 280.8 582.1 277.7 583.4 C274.6 584.7 284.1 592 289.2 594.9 C294.3 597.8 300.7 599.7 308.3 600.7 C315.9 601.7 328.8 599.4 335 600.7 C341.2 602 343.8 604.5 345.7 608.3 C347.6 612.1 348.7 618.8 346.6 623.6 C344.5 628.4 338.6 631.9 333.2 637 C327.8 642.1 319.1 647.6 314 654.3 C308.9 661 305.2 669.6 302.6 677.3 C300.1 685 299 694.2 298.7 700.3 C298.4 706.4 290.5 711.7 300.7 714 C310.9 716.3 349.5 718.2 360 714 C370.5 709.8 362.6 696.2 363.9 688.8 C365.2 681.4 366.1 676 367.7 669.6 C369.3 663.2 370.5 655.6 373.4 650.5 C376.3 645.4 381.2 642.8 385 639 C388.8 635.2 393.2 633.2 396.4 627.5 C399.6 621.8 400.8 609.9 404 604.5 C407.2 599.1 409.2 598.1 415.6 594.9 C422 591.7 432.5 590.3 442.4 585.3 C452.3 580.3 470.1 571.2 475 565 C479.9 558.8 477 547.8 472 548Z" stroke="none" stroke-width="0" fill="#fff"/>
<path d="M614 548 C619 548.2 632.6 561.1 641 566 C649.4 570.9 653.4 573.7 664.4 577.5 C675.4 581.3 692.9 587.1 707 589 C721.1 590.9 737.2 589.3 749 589 C760.8 588.7 768.1 587.9 778 587 C787.9 586.1 805.2 582.1 808.3 583.4 C811.4 584.7 801.9 592 796.8 594.9 C791.7 597.8 785.3 599.7 777.7 600.7 C770.1 601.7 757.2 599.4 751 600.7 C744.8 602 742.2 604.5 740.3 608.3 C738.4 612.1 737.3 618.8 739.4 623.6 C741.5 628.4 747.4 631.9 752.8 637 C758.2 642.1 766.9 647.6 772 654.3 C777.1 661 780.9 669.6 783.4 677.3 C785.9 685 787 694.2 787.3 700.3 C787.6 706.4 795.5 711.7 785.3 714 C775.1 716.3 736.5 718.2 726 714 C715.5 709.8 723.4 696.2 722.1 688.8 C720.8 681.4 719.9 676 718.3 669.6 C716.7 663.2 715.5 655.6 712.6 650.5 C709.7 645.4 704.8 642.8 701 639 C697.2 635.2 692.8 633.2 689.6 627.5 C686.4 621.8 685.2 609.9 682 604.5 C678.8 599.1 676.8 598.1 670.4 594.9 C664 591.7 653.5 590.3 643.6 585.3 C633.7 580.3 615.9 571.2 611 565 C606.1 558.8 609 547.8 614 548Z" stroke="none" stroke-width="0" fill="#fff"/>
<path d="M480 450.6 C477.3 449 469.6 442.4 464 441 C458.4 439.6 449.6 437.2 446.6 442 C443.6 446.8 445.6 460.9 446 470 C446.4 479.1 445.8 487.3 448.7 496.6 C451.6 505.9 459.7 517.4 463.6 526 C467.5 534.6 475.1 541.3 472 548 C468.9 554.7 453.4 561.1 445 566 C436.6 570.9 432.6 573.7 421.6 577.5 C410.6 581.3 393.1 587.1 379 589 C364.9 590.9 348.8 589.3 337 589 C325.2 588.7 317.8 588 308 587 C298.2 586 283 583.7 278 583" stroke="#c7b5a1" stroke-width="5.2" fill="none" transform="translate(1.5 2)"/>
<path d="M480 450.6 C477.3 449 469.6 442.4 464 441 C458.4 439.6 449.6 437.2 446.6 442 C443.6 446.8 445.6 460.9 446 470 C446.4 479.1 445.8 487.3 448.7 496.6 C451.6 505.9 459.7 517.4 463.6 526 C467.5 534.6 475.1 541.3 472 548 C468.9 554.7 453.4 561.1 445 566 C436.6 570.9 432.6 573.7 421.6 577.5 C410.6 581.3 393.1 587.1 379 589 C364.9 590.9 348.8 589.3 337 589 C325.2 588.7 317.8 588 308 587 C298.2 586 283 583.7 278 583" stroke="#17173a" stroke-width="4" fill="none"/>
<path d="M606 450.6 C608.7 449 616.4 442.4 622 441 C627.6 439.6 636.4 437.2 639.4 442 C642.4 446.8 640.4 460.9 640 470 C639.6 479.1 640.2 487.3 637.3 496.6 C634.4 505.9 626.3 517.4 622.4 526 C618.5 534.6 610.9 541.3 614 548 C617.1 554.7 632.6 561.1 641 566 C649.4 570.9 653.4 573.7 664.4 577.5 C675.4 581.3 692.9 587.1 707 589 C721.1 590.9 737.2 589.3 749 589 C760.8 588.7 768.2 588 778 587 C787.8 586 803 583.7 808 583" stroke="#c7b5a1" stroke-width="5.2" fill="none" transform="translate(-1.5 2)"/>
<path d="M606 450.6 C608.7 449 616.4 442.4 622 441 C627.6 439.6 636.4 437.2 639.4 442 C642.4 446.8 640.4 460.9 640 470 C639.6 479.1 640.2 487.3 637.3 496.6 C634.4 505.9 626.3 517.4 622.4 526 C618.5 534.6 610.9 541.3 614 548 C617.1 554.7 632.6 561.1 641 566 C649.4 570.9 653.4 573.7 664.4 577.5 C675.4 581.3 692.9 587.1 707 589 C721.1 590.9 737.2 589.3 749 589 C760.8 588.7 768.2 588 778 587 C787.8 586 803 583.7 808 583" stroke="#17173a" stroke-width="4" fill="none"/>
<path d="M482 450.5 C484 445.4 489.1 430.4 491.8 426 C494.5 421.6 506.9 408.9 509 406.5 C511.1 404.1 509.4 402.7 512.6 401.6 C515.8 400.6 534.9 396.1 541 396 C547.1 395.9 570.4 399.9 574 401 C577.6 402.1 575.2 404 577.4 406.5 C579.6 409 592.9 421.6 595.8 426 C598.7 430.4 605.8 444.5 606.8 450.5 C607.8 456.5 605.3 477.9 605.5 486.4 C605.7 494.9 607.2 524.6 608.8 535.4 C610.4 546.2 619.9 586.4 621.9 594.3 C623.9 602.2 628.4 609.4 628.4 614 C628.4 618.6 623.9 635 621.9 640.2 C619.9 645.4 611.1 663 608.8 666.3 C606.5 669.6 601.3 669.9 599 672.9 C596.7 675.9 588.5 691.7 585.9 695.8 C583.3 699.9 584.6 712.2 572.8 714 C561 715.8 478.1 717.1 468 714 C457.9 710.9 470.4 688.8 471.4 682.7 C472.4 676.6 477.6 660.7 477.9 653.2 C478.2 645.7 475.4 619.2 474.6 607.4 C473.8 595.6 470 548.5 469.7 535.4 C469.4 522.3 470.2 485 471.4 476.5 C472.6 468 480 455.6 482 450.5Z" stroke="#cbbba8" stroke-width="2" fill="#fff"/>
<path d="M468 484 C469.3 487.5 475.1 503.2 478 510 C480.9 516.8 486.5 528.3 490 535 C493.5 541.7 500 553.3 504 560 C508 566.7 515.7 579 520 585 C524.3 591 532 599.8 536 605 C540 610.2 546 623.6 550 624 C554 624.4 561.7 613.2 566 608 C570.3 602.8 578 592.1 582 585 C586 577.9 592.9 563 596 555 C599.1 547 603.3 533.7 605 525 C606.7 516.3 608.5 494.7 609 490" stroke="#cbbba8" stroke-width="5" fill="none" stroke-dasharray="1.4 1.6"/>
<path d="M471.4 480 C475.7 488.7 496.1 530.1 504 545.3 C511.9 560.5 524.2 584.7 530.3 594.3 C536.4 603.9 544.8 616.4 550 617.3 C555.2 618.2 563.8 609.6 569.5 600.9 C575.2 592.2 587.6 567.1 592.4 551.8 C597.2 536.5 603.8 495.1 605.5 486.4" stroke="#cbbba8" stroke-width="2.6" fill="none"/>
<path d="M484.5 489.6 C488.4 494.4 505.7 517.7 514 525.6 C522.3 533.5 537.9 548.5 546.6 548.5 C555.3 548.5 572.3 533.5 579.3 525.6 C586.3 517.7 596.4 494.4 599 489.6" stroke="#cbbba8" stroke-width="1.6" fill="none"/>
<path d="M497.5 519 C500.6 523.8 513.4 548.4 520.4 555 C527.4 561.6 543 568.2 550 568.2 C557 568.2 567.1 561.6 572.8 555 C578.5 548.4 589.8 523.8 592.4 519" stroke="#cbbba8" stroke-width="1.6" fill="none"/>
<path d="M510.6 551.8 C513.2 555.3 525 572.8 530.3 578 C535.6 583.2 544.8 591 550 591 C555.2 591 564.7 582.8 569.5 578 C574.3 573.2 583.7 558.1 585.9 555" stroke="#cbbba8" stroke-width="1.6" fill="none"/>
<path d="M477.9 614 C479.6 618.8 486.6 641.3 491 650 C495.4 658.7 504.5 673.7 510.6 679.4 C516.7 685.1 528.9 690.8 536.8 692.5 C544.7 694.2 561.6 694.7 569.5 692.5 C577.4 690.3 592.2 678.3 595.7 676.1" stroke="#cbbba8" stroke-width="1.8" fill="none"/>
<path d="M553 620.5 C553 624.8 551.7 643.4 553 653 C554.3 662.6 561.7 687.2 563 692.5" stroke="#cbbba8" stroke-width="1.5" fill="none"/>
<path d="M504 578 C504.5 585.4 506.5 620.1 507.4 633.6 C508.3 647.1 510.2 673.3 510.6 679.4" stroke="#cbbba8" stroke-width="1.5" fill="none"/>
<path d="M563 623.8 L585.9 682.7" stroke="#cbbba8" stroke-width="1.5" fill="none"/>
<path d="M536.8 623.8 L533.5 666.3" stroke="#cbbba8" stroke-width="1.5" fill="none"/>
<path d="M482 472.5 C484 475.1 491.2 487.8 496.7 492 C502.2 496.2 520 502.7 523.6 504.3" stroke="#cbbba8" stroke-width="2.2" fill="none"/>
<path d="M601.9 477.4 C599.9 480 592.6 493.4 587.2 497 C581.8 500.6 564.9 503.3 561.5 504.3" stroke="#cbbba8" stroke-width="2.2" fill="none"/>
<path d="M523.6 396.7 L523.6 506.8" stroke="#cbbba8" stroke-width="1.8" fill="none"/>
<path d="M561.5 396.7 L561.5 506.8" stroke="#cbbba8" stroke-width="1.8" fill="none"/>
<path d="M531 398 L531 500" stroke="#cbbba8" stroke-width="1.4" fill="none"/>
<path d="M554 398 L554 500" stroke="#cbbba8" stroke-width="1.4" fill="none"/>
<path d="M535 400 C535.4 409.3 537.2 451.6 538 470 C538.8 488.4 540.2 538 541 538 C541.8 538 543.1 488.4 544 470 C544.9 451.6 547.5 409.3 548 400" stroke="#cbbba8" stroke-width="1.5" fill="none"/>
<path d="M504 374.7 C504.3 376.7 504.9 386.6 506.5 389.4 C508.1 392.2 513.7 394.5 516.3 395.5 C518.9 396.5 524.7 396.5 526 396.7" stroke="#cbbba8" stroke-width="2" fill="none"/>
<path d="M580 374.7 C579.7 376.7 579.1 386.6 577.5 389.4 C575.9 392.2 570.3 394.5 567.7 395.5 C565.1 396.5 559.3 396.5 558 396.7" stroke="#cbbba8" stroke-width="2" fill="none"/>
<path d="M521 373.5 L562.7 373.5" stroke="#cbbba8" stroke-width="1.8" fill="none"/>
<path d="M526 378 L558 378" stroke="#cbbba8" stroke-width="1.5" fill="none"/>
<path d="M472 482 C472.8 484.4 476.1 494.9 478 500 C479.9 505.1 483.6 514.7 486 520 C488.4 525.3 493.3 534.7 496 540 C498.7 545.3 503.1 554.7 506 560 C508.9 565.3 514.8 575.1 518 580 C521.2 584.9 525.7 591.7 530 597 C534.3 602.3 544.7 619.1 550 620 C555.3 620.9 565.5 609.3 570 604 C574.5 598.7 580.5 587.2 584 580 C587.5 572.8 593.3 558.7 596 550 C598.7 541.3 602.5 523 604 515 C605.5 507 606.6 493.3 607 490" stroke="#cbbba8" stroke-width="1.2" fill="none"/>
<ellipse cx="530" cy="390" rx="2.4" ry="5.5" stroke="#cbbba8" stroke-width="1.5" fill="none"/>
<ellipse cx="535.5" cy="390" rx="2.4" ry="5.5" stroke="#cbbba8" stroke-width="1.5" fill="none"/>
<ellipse cx="541" cy="390" rx="2.4" ry="5.5" stroke="#cbbba8" stroke-width="1.5" fill="none"/>
<ellipse cx="546.5" cy="390" rx="2.4" ry="5.5" stroke="#cbbba8" stroke-width="1.5" fill="none"/>
<ellipse cx="552" cy="390" rx="2.4" ry="5.5" stroke="#cbbba8" stroke-width="1.5" fill="none"/>
<circle cx="472" cy="462" r="3" stroke="#cbbba8" stroke-width="1.5" fill="#fff"/>
<circle cx="478" cy="470" r="3" stroke="#cbbba8" stroke-width="1.5" fill="#fff"/>
<circle cx="612" cy="462" r="3" stroke="#cbbba8" stroke-width="1.5" fill="#fff"/>
<circle cx="606" cy="470" r="3" stroke="#cbbba8" stroke-width="1.5" fill="#fff"/>
<path d="M601.7 147 C603.3 146 607 141 611.5 141 C616 141 623.4 143.8 629 147 C634.6 150.2 640.2 155.8 645 160 C649.8 164.2 654 170 658 172 C662 174 665.7 173.8 669 172 C672.3 170.2 675.7 166 678 161 C680.3 156 681.8 148.8 683 142 C684.2 135.2 684.8 126.3 685 120 C685.2 113.7 685 110.2 684 104 C683 97.8 679.8 86.5 679 83" stroke="#c7b5a1" stroke-width="5.2" fill="none" transform="translate(-1.5 2)"/>
<path d="M601.7 147 C603.3 146 607 141 611.5 141 C616 141 623.4 143.8 629 147 C634.6 150.2 640.2 155.8 645 160 C649.8 164.2 654 170 658 172 C662 174 665.7 173.8 669 172 C672.3 170.2 675.7 166 678 161 C680.3 156 681.8 148.8 683 142 C684.2 135.2 684.8 126.3 685 120 C685.2 113.7 685 110.2 684 104 C683 97.8 679.8 86.5 679 83" stroke="#17173a" stroke-width="4" fill="none"/>
<path d="M484.3 147 C482.7 146 479.1 141 474.5 141 C469.9 141 462.6 143.8 457 147 C451.4 150.2 445.8 155.8 441 160 C436.2 164.2 432 170 428 172 C424 174 420.3 173.8 417 172 C413.7 170.2 410.3 166 408 161 C405.7 156 404.2 148.8 403 142 C401.8 135.2 401.2 126.3 401 120 C400.8 113.7 401 110.2 402 104 C403 97.8 406.2 86.5 407 83" stroke="#c7b5a1" stroke-width="5.2" fill="none" transform="translate(1.5 2)"/>
<path d="M484.3 147 C482.7 146 479.1 141 474.5 141 C469.9 141 462.6 143.8 457 147 C451.4 150.2 445.8 155.8 441 160 C436.2 164.2 432 170 428 172 C424 174 420.3 173.8 417 172 C413.7 170.2 410.3 166 408 161 C405.7 156 404.2 148.8 403 142 C401.8 135.2 401.2 126.3 401 120 C400.8 113.7 401 110.2 402 104 C403 97.8 406.2 86.5 407 83" stroke="#17173a" stroke-width="4" fill="none"/>
<path d="M601.7 147 C603.5 148.3 607.2 151.7 612.6 155 C618 158.3 627.6 162.7 634 167 C640.4 171.3 646.2 175.8 651 181 C655.8 186.2 660.4 193.2 663 198 C665.6 202.8 663.8 205 666.5 210 C669.2 215 671.6 219.2 679 228 C686.4 236.8 703.3 251.8 711 263 C718.7 274.2 722.2 285 725 295 C727.8 305 725.2 316 728 323 C730.8 330 736.7 335.2 742 337 C747.3 338.8 756.3 338 760 334 C763.7 330 765.8 320.7 764 313 C762.2 305.3 756.7 298 749.5 288 C742.3 278 728.9 263 721 253 C713.1 243 705.8 236.3 702 228 C698.2 219.7 696.5 211.8 698 203 C699.5 194.2 705.3 182 711 175 C716.7 168 725 164.8 732 161 C739 157.2 748.8 156.2 753 152 C757.2 147.8 757.6 141.8 757 136 C756.4 130.2 752.2 122 749.5 117 C746.8 112 741.9 104.8 741 106 C740.1 107.2 743.2 118.3 744 124 C744.8 129.7 746.8 136 746 140 C745.2 144 742.8 145.7 739 148 C735.2 150.3 726.8 152.8 723 154 C719.2 155.2 717.8 156.8 716 155 C714.2 153.2 712 149.2 712 143 C712 136.8 716.2 126.2 716 118 C715.8 109.8 712.5 100.3 711 94 C709.5 87.7 707.7 82.3 707 80" stroke="#c7b5a1" stroke-width="5.2" fill="none" transform="translate(-1.5 2)"/>
<path d="M601.7 147 C603.5 148.3 607.2 151.7 612.6 155 C618 158.3 627.6 162.7 634 167 C640.4 171.3 646.2 175.8 651 181 C655.8 186.2 660.4 193.2 663 198 C665.6 202.8 663.8 205 666.5 210 C669.2 215 671.6 219.2 679 228 C686.4 236.8 703.3 251.8 711 263 C718.7 274.2 722.2 285 725 295 C727.8 305 725.2 316 728 323 C730.8 330 736.7 335.2 742 337 C747.3 338.8 756.3 338 760 334 C763.7 330 765.8 320.7 764 313 C762.2 305.3 756.7 298 749.5 288 C742.3 278 728.9 263 721 253 C713.1 243 705.8 236.3 702 228 C698.2 219.7 696.5 211.8 698 203 C699.5 194.2 705.3 182 711 175 C716.7 168 725 164.8 732 161 C739 157.2 748.8 156.2 753 152 C757.2 147.8 757.6 141.8 757 136 C756.4 130.2 752.2 122 749.5 117 C746.8 112 741.9 104.8 741 106 C740.1 107.2 743.2 118.3 744 124 C744.8 129.7 746.8 136 746 140 C745.2 144 742.8 145.7 739 148 C735.2 150.3 726.8 152.8 723 154 C719.2 155.2 717.8 156.8 716 155 C714.2 153.2 712 149.2 712 143 C712 136.8 716.2 126.2 716 118 C715.8 109.8 712.5 100.3 711 94 C709.5 87.7 707.7 82.3 707 80" stroke="#17173a" stroke-width="4" fill="none"/>
<path d="M484.3 147 C482.5 148.3 478.8 151.7 473.4 155 C468 158.3 458.4 162.7 452 167 C445.6 171.3 439.8 175.8 435 181 C430.2 186.2 425.6 193.2 423 198 C420.4 202.8 422.2 205 419.5 210 C416.8 215 414.4 219.2 407 228 C399.6 236.8 382.7 251.8 375 263 C367.3 274.2 363.8 285 361 295 C358.2 305 360.8 316 358 323 C355.2 330 349.3 335.2 344 337 C338.7 338.8 329.7 338 326 334 C322.3 330 320.2 320.7 322 313 C323.8 305.3 329.3 298 336.5 288 C343.7 278 357.1 263 365 253 C372.9 243 380.2 236.3 384 228 C387.8 219.7 389.5 211.8 388 203 C386.5 194.2 380.7 182 375 175 C369.3 168 361 164.8 354 161 C347 157.2 337.2 156.2 333 152 C328.8 147.8 328.4 141.8 329 136 C329.6 130.2 333.8 122 336.5 117 C339.2 112 344.1 104.8 345 106 C345.9 107.2 342.8 118.3 342 124 C341.2 129.7 339.2 136 340 140 C340.8 144 343.2 145.7 347 148 C350.8 150.3 359.2 152.8 363 154 C366.8 155.2 368.2 156.8 370 155 C371.8 153.2 374 149.2 374 143 C374 136.8 369.8 126.2 370 118 C370.2 109.8 373.5 100.3 375 94 C376.5 87.7 378.3 82.3 379 80" stroke="#c7b5a1" stroke-width="5.2" fill="none" transform="translate(1.5 2)"/>
<path d="M484.3 147 C482.5 148.3 478.8 151.7 473.4 155 C468 158.3 458.4 162.7 452 167 C445.6 171.3 439.8 175.8 435 181 C430.2 186.2 425.6 193.2 423 198 C420.4 202.8 422.2 205 419.5 210 C416.8 215 414.4 219.2 407 228 C399.6 236.8 382.7 251.8 375 263 C367.3 274.2 363.8 285 361 295 C358.2 305 360.8 316 358 323 C355.2 330 349.3 335.2 344 337 C338.7 338.8 329.7 338 326 334 C322.3 330 320.2 320.7 322 313 C323.8 305.3 329.3 298 336.5 288 C343.7 278 357.1 263 365 253 C372.9 243 380.2 236.3 384 228 C387.8 219.7 389.5 211.8 388 203 C386.5 194.2 380.7 182 375 175 C369.3 168 361 164.8 354 161 C347 157.2 337.2 156.2 333 152 C328.8 147.8 328.4 141.8 329 136 C329.6 130.2 333.8 122 336.5 117 C339.2 112 344.1 104.8 345 106 C345.9 107.2 342.8 118.3 342 124 C341.2 129.7 339.2 136 340 140 C340.8 144 343.2 145.7 347 148 C350.8 150.3 359.2 152.8 363 154 C366.8 155.2 368.2 156.8 370 155 C371.8 153.2 374 149.2 374 143 C374 136.8 369.8 126.2 370 118 C370.2 109.8 373.5 100.3 375 94 C376.5 87.7 378.3 82.3 379 80" stroke="#17173a" stroke-width="4" fill="none"/>
<path d="M696.5 80 C697.2 84 700.5 95.2 700.8 104 C701.1 112.8 699.3 126.3 698.3 132.5 C697.3 138.7 695.4 139.6 694.8 141" stroke="#c7b5a1" stroke-width="5.2" fill="none" transform="translate(-1.5 2)"/>
<path d="M696.5 80 C697.2 84 700.5 95.2 700.8 104 C701.1 112.8 699.3 126.3 698.3 132.5 C697.3 138.7 695.4 139.6 694.8 141" stroke="#17173a" stroke-width="4" fill="none"/>
<path d="M389.5 80 C388.8 84 385.5 95.2 385.2 104 C384.9 112.8 386.7 126.3 387.7 132.5 C388.7 138.7 390.6 139.6 391.2 141" stroke="#c7b5a1" stroke-width="5.2" fill="none" transform="translate(1.5 2)"/>
<path d="M389.5 80 C388.8 84 385.5 95.2 385.2 104 C384.9 112.8 386.7 126.3 387.7 132.5 C388.7 138.7 390.6 139.6 391.2 141" stroke="#17173a" stroke-width="4" fill="none"/>
<path d="M701.8 169.6 C699.1 172.2 689.7 179.9 685.9 185.5 C682.1 191.1 679.2 197.2 678.9 203.1 C678.6 209 683.3 217.9 684.2 220.8" stroke="#c7b5a1" stroke-width="5.2" fill="none" transform="translate(-1.5 2)"/>
<path d="M701.8 169.6 C699.1 172.2 689.7 179.9 685.9 185.5 C682.1 191.1 679.2 197.2 678.9 203.1 C678.6 209 683.3 217.9 684.2 220.8" stroke="#17173a" stroke-width="4" fill="none"/>
<path d="M384.2 169.6 C386.9 172.2 396.3 179.9 400.1 185.5 C403.9 191.1 406.8 197.2 407.1 203.1 C407.4 209 402.7 217.9 401.8 220.8" stroke="#c7b5a1" stroke-width="5.2" fill="none" transform="translate(1.5 2)"/>
<path d="M384.2 169.6 C386.9 172.2 396.3 179.9 400.1 185.5 C403.9 191.1 406.8 197.2 407.1 203.1 C407.4 209 402.7 217.9 401.8 220.8" stroke="#17173a" stroke-width="4" fill="none"/>
<path d="M1064 298 C1060.9 301 1050.8 311 1045.3 316.2 C1039.8 321.4 1034.9 328.6 1031 329 C1027.1 329.4 1026.1 321.4 1022 318.8 C1017.9 316.2 1012.5 313.2 1006.5 313.6 C1000.5 314 993.5 319.2 985.8 321.3 C978 323.4 971.7 325.1 960 326.5 C948.3 327.9 934.1 326.1 915.5 329.5 C896.9 332.9 868.3 338.8 848.3 347 C828.3 355.2 806.5 367.8 795.3 379 C784.1 390.2 783.6 408.4 781.2 414.3" stroke="#c7b5a1" stroke-width="5.2" fill="none" transform="translate(-1.5 2)"/>
<path d="M1064 298 C1060.9 301 1050.8 311 1045.3 316.2 C1039.8 321.4 1034.9 328.6 1031 329 C1027.1 329.4 1026.1 321.4 1022 318.8 C1017.9 316.2 1012.5 313.2 1006.5 313.6 C1000.5 314 993.5 319.2 985.8 321.3 C978 323.4 971.7 325.1 960 326.5 C948.3 327.9 934.1 326.1 915.5 329.5 C896.9 332.9 868.3 338.8 848.3 347 C828.3 355.2 806.5 367.8 795.3 379 C784.1 390.2 783.6 408.4 781.2 414.3" stroke="#17173a" stroke-width="4" fill="none"/>
<path d="M22 298 C25.1 301 35.2 311 40.7 316.2 C46.2 321.4 51.1 328.6 55 329 C58.9 329.4 59.9 321.4 64 318.8 C68.1 316.2 73.5 313.2 79.5 313.6 C85.5 314 92.5 319.2 100.2 321.3 C108 323.4 114.3 325.1 126 326.5 C137.7 327.9 151.9 326.1 170.5 329.5 C189.1 332.9 217.7 338.8 237.7 347 C257.7 355.2 279.5 367.8 290.7 379 C301.9 390.2 302.4 408.4 304.8 414.3" stroke="#c7b5a1" stroke-width="5.2" fill="none" transform="translate(1.5 2)"/>
<path d="M22 298 C25.1 301 35.2 311 40.7 316.2 C46.2 321.4 51.1 328.6 55 329 C58.9 329.4 59.9 321.4 64 318.8 C68.1 316.2 73.5 313.2 79.5 313.6 C85.5 314 92.5 319.2 100.2 321.3 C108 323.4 114.3 325.1 126 326.5 C137.7 327.9 151.9 326.1 170.5 329.5 C189.1 332.9 217.7 338.8 237.7 347 C257.7 355.2 279.5 367.8 290.7 379 C301.9 390.2 302.4 408.4 304.8 414.3" stroke="#17173a" stroke-width="4" fill="none"/>
<path d="M781.2 414.3 C786.5 413.7 798.9 416.6 813 410.7 C827.1 404.8 847.8 390.2 866 379 C884.2 367.8 906.8 349.8 922.5 343.6 C938.2 337.4 949.5 341 960 342 C970.5 343 978.9 346.4 985.8 349.8 C992.7 353.2 996.1 357.5 1001.3 362.7 C1006.5 367.9 1013.3 375.2 1016.8 380.8 C1020.2 386.4 1020.3 389 1022 396.3 C1023.7 403.6 1025.5 413.1 1027.2 424.7 C1028.9 436.3 1030.7 464.3 1032.4 466 C1034.1 467.7 1035.8 443.6 1037.5 435 C1039.2 426.4 1042.7 421.7 1042.7 414.4 C1042.7 407.1 1039.2 398.8 1037.5 391 C1035.8 383.2 1035 375.2 1032.4 367.9 C1029.8 360.6 1026.3 352.4 1022 347.2 C1017.7 342 1011.2 338.7 1006.5 336.8 C1001.8 334.9 995.8 335.8 993.6 335.6" stroke="#c7b5a1" stroke-width="5.2" fill="none" transform="translate(-1.5 2)"/>
<path d="M781.2 414.3 C786.5 413.7 798.9 416.6 813 410.7 C827.1 404.8 847.8 390.2 866 379 C884.2 367.8 906.8 349.8 922.5 343.6 C938.2 337.4 949.5 341 960 342 C970.5 343 978.9 346.4 985.8 349.8 C992.7 353.2 996.1 357.5 1001.3 362.7 C1006.5 367.9 1013.3 375.2 1016.8 380.8 C1020.2 386.4 1020.3 389 1022 396.3 C1023.7 403.6 1025.5 413.1 1027.2 424.7 C1028.9 436.3 1030.7 464.3 1032.4 466 C1034.1 467.7 1035.8 443.6 1037.5 435 C1039.2 426.4 1042.7 421.7 1042.7 414.4 C1042.7 407.1 1039.2 398.8 1037.5 391 C1035.8 383.2 1035 375.2 1032.4 367.9 C1029.8 360.6 1026.3 352.4 1022 347.2 C1017.7 342 1011.2 338.7 1006.5 336.8 C1001.8 334.9 995.8 335.8 993.6 335.6" stroke="#17173a" stroke-width="4" fill="none"/>
<path d="M304.8 414.3 C299.5 413.7 287.1 416.6 273 410.7 C258.9 404.8 238.2 390.2 220 379 C201.8 367.8 179.2 349.8 163.5 343.6 C147.8 337.4 136.5 341 126 342 C115.5 343 107.1 346.4 100.2 349.8 C93.3 353.2 89.9 357.5 84.7 362.7 C79.5 367.9 72.7 375.2 69.2 380.8 C65.8 386.4 65.7 389 64 396.3 C62.3 403.6 60.5 413.1 58.8 424.7 C57.1 436.3 55.3 464.3 53.6 466 C51.9 467.7 50.2 443.6 48.5 435 C46.8 426.4 43.3 421.7 43.3 414.4 C43.3 407.1 46.8 398.8 48.5 391 C50.2 383.2 51 375.2 53.6 367.9 C56.2 360.6 59.7 352.4 64 347.2 C68.3 342 74.8 338.7 79.5 336.8 C84.2 334.9 90.2 335.8 92.4 335.6" stroke="#c7b5a1" stroke-width="5.2" fill="none" transform="translate(1.5 2)"/>
<path d="M304.8 414.3 C299.5 413.7 287.1 416.6 273 410.7 C258.9 404.8 238.2 390.2 220 379 C201.8 367.8 179.2 349.8 163.5 343.6 C147.8 337.4 136.5 341 126 342 C115.5 343 107.1 346.4 100.2 349.8 C93.3 353.2 89.9 357.5 84.7 362.7 C79.5 367.9 72.7 375.2 69.2 380.8 C65.8 386.4 65.7 389 64 396.3 C62.3 403.6 60.5 413.1 58.8 424.7 C57.1 436.3 55.3 464.3 53.6 466 C51.9 467.7 50.2 443.6 48.5 435 C46.8 426.4 43.3 421.7 43.3 414.4 C43.3 407.1 46.8 398.8 48.5 391 C50.2 383.2 51 375.2 53.6 367.9 C56.2 360.6 59.7 352.4 64 347.2 C68.3 342 74.8 338.7 79.5 336.8 C84.2 334.9 90.2 335.8 92.4 335.6" stroke="#17173a" stroke-width="4" fill="none"/>
<path d="M1064 326 C1060.9 328.7 1048 337.2 1045.3 342 C1042.6 346.8 1044.8 351.3 1047.9 355 C1051 358.7 1061.3 362.5 1064 364" stroke="#c7b5a1" stroke-width="5.2" fill="none" transform="translate(-1.5 2)"/>
<path d="M1064 326 C1060.9 328.7 1048 337.2 1045.3 342 C1042.6 346.8 1044.8 351.3 1047.9 355 C1051 358.7 1061.3 362.5 1064 364" stroke="#17173a" stroke-width="4" fill="none"/>
<path d="M1064 377 C1061.1 376.8 1049.1 372.4 1046.6 375.6 C1044.1 378.8 1046.1 385.6 1049 396.3 C1051.9 407 1061.5 432.7 1064 440" stroke="#c7b5a1" stroke-width="5.2" fill="none" transform="translate(-1.5 2)"/>
<path d="M1064 377 C1061.1 376.8 1049.1 372.4 1046.6 375.6 C1044.1 378.8 1046.1 385.6 1049 396.3 C1051.9 407 1061.5 432.7 1064 440" stroke="#17173a" stroke-width="4" fill="none"/>
<path d="M406.6 369 C404.8 369.8 399 368.5 395.6 374 C392.2 379.5 388.9 394.3 386 402 C383.1 409.7 382.6 411.6 378 420 C373.4 428.4 365 443.6 358.5 452.6 C352 461.6 345.5 467.8 339 473.8 C332.5 479.8 327.6 484.1 319.4 488.5 C311.2 492.9 298.9 497.8 290 500 C281.1 502.2 274.1 502.2 266 502 C257.9 501.8 248.4 500.3 241.6 499 C234.8 497.7 232.1 497.8 225.3 494 C218.5 490.2 207.6 482.3 200.8 476 C194 469.7 189.1 456.6 184.5 456.3 C179.9 456 175.3 467.2 173 474.3 C170.7 481.4 169.8 492.8 170.6 498.7 C171.4 504.6 174.3 506.4 178 510 C181.7 513.5 186.1 517.4 192.6 520 C199.1 522.6 207.5 524.9 217 525.6 C226.5 526.3 240.7 523.3 249.7 524 C258.7 524.7 266.6 526.9 271 529.7 C275.4 532.5 276.9 537.5 275.8 541 C274.7 544.5 269 547.5 264.4 551 C259.8 554.5 252.4 557.5 248 562 C243.6 566.5 241.5 571.5 238 578 C234.5 584.5 224.7 601.7 227 601 C229.3 600.3 243.2 580.8 251.7 573.8 C260.2 566.8 268.7 564.6 277.8 559 C286.9 553.4 298.8 546.9 306.3 540 C313.8 533.1 318.2 524.3 322.6 517.9 C327 511.5 328.9 507.6 332.4 501.6 C335.9 495.6 339.2 488.3 343.8 482 C348.4 475.7 354 469.2 360 464 C366 458.8 372.9 455.6 379.7 451 C386.5 446.4 395.4 441.8 401 436.3 C406.6 430.8 410.8 426.9 413 418 C415.2 409.1 415.5 391.2 414.4 383 C413.3 374.8 407.9 371.3 406.6 369 C405.3 366.7 408.4 368.2 406.6 369Z" stroke="none" stroke-width="0" fill="#fff"/>
<path d="M679.4 369 C681.2 369.8 687 368.5 690.4 374 C693.8 379.5 697.1 394.3 700 402 C702.9 409.7 703.4 411.6 708 420 C712.6 428.4 721 443.6 727.5 452.6 C734 461.6 740.5 467.8 747 473.8 C753.5 479.8 758.4 484.1 766.6 488.5 C774.8 492.9 787.1 497.8 796 500 C804.9 502.2 811.9 502.2 820 502 C828.1 501.8 837.6 500.3 844.4 499 C851.2 497.7 853.9 497.8 860.7 494 C867.5 490.2 878.4 482.3 885.2 476 C892 469.7 896.9 456.6 901.5 456.3 C906.1 456 910.7 467.2 913 474.3 C915.3 481.4 916.2 492.8 915.4 498.7 C914.6 504.6 911.7 506.4 908 510 C904.3 513.5 899.9 517.4 893.4 520 C886.9 522.6 878.5 524.9 869 525.6 C859.5 526.3 845.3 523.3 836.3 524 C827.3 524.7 819.4 526.9 815 529.7 C810.6 532.5 809.1 537.5 810.2 541 C811.3 544.5 817 547.5 821.6 551 C826.2 554.5 833.6 557.5 838 562 C842.4 566.5 844.5 571.5 848 578 C851.5 584.5 861.3 601.7 859 601 C856.7 600.3 842.8 580.8 834.3 573.8 C825.8 566.8 817.3 564.6 808.2 559 C799.1 553.4 787.2 546.9 779.7 540 C772.2 533.1 767.8 524.3 763.4 517.9 C759 511.5 757.1 507.6 753.6 501.6 C750.1 495.6 746.8 488.3 742.2 482 C737.6 475.7 732 469.2 726 464 C720 458.8 713.1 455.6 706.3 451 C699.5 446.4 690.5 441.8 685 436.3 C679.5 430.8 675.2 426.9 673 418 C670.8 409.1 670.5 391.2 671.6 383 C672.7 374.8 678.1 371.3 679.4 369 C680.7 366.7 677.6 368.2 679.4 369Z" stroke="none" stroke-width="0" fill="#fff"/>
<path d="M406.6 369 C404.8 369.8 399 368.5 395.6 374 C392.2 379.5 388.9 394.3 386 402 C383.1 409.7 382.6 411.6 378 420 C373.4 428.4 365 443.6 358.5 452.6 C352 461.6 345.5 467.8 339 473.8 C332.5 479.8 327.6 484.1 319.4 488.5 C311.2 492.9 298.9 497.8 290 500 C281.1 502.2 274.1 502.2 266 502 C257.9 501.8 248.4 500.3 241.6 499 C234.8 497.7 232.1 497.8 225.3 494 C218.5 490.2 207.6 482.3 200.8 476 C194 469.7 187.2 459.6 184.5 456.3" stroke="#c7b5a1" stroke-width="5.2" fill="none" transform="translate(1.5 2)"/>
<path d="M406.6 369 C404.8 369.8 399 368.5 395.6 374 C392.2 379.5 388.9 394.3 386 402 C383.1 409.7 382.6 411.6 378 420 C373.4 428.4 365 443.6 358.5 452.6 C352 461.6 345.5 467.8 339 473.8 C332.5 479.8 327.6 484.1 319.4 488.5 C311.2 492.9 298.9 497.8 290 500 C281.1 502.2 274.1 502.2 266 502 C257.9 501.8 248.4 500.3 241.6 499 C234.8 497.7 232.1 497.8 225.3 494 C218.5 490.2 207.6 482.3 200.8 476 C194 469.7 187.2 459.6 184.5 456.3" stroke="#17173a" stroke-width="4" fill="none"/>
<path d="M679.4 369 C681.2 369.8 687 368.5 690.4 374 C693.8 379.5 697.1 394.3 700 402 C702.9 409.7 703.4 411.6 708 420 C712.6 428.4 721 443.6 727.5 452.6 C734 461.6 740.5 467.8 747 473.8 C753.5 479.8 758.4 484.1 766.6 488.5 C774.8 492.9 787.1 497.8 796 500 C804.9 502.2 811.9 502.2 820 502 C828.1 501.8 837.6 500.3 844.4 499 C851.2 497.7 853.9 497.8 860.7 494 C867.5 490.2 878.4 482.3 885.2 476 C892 469.7 898.8 459.6 901.5 456.3" stroke="#c7b5a1" stroke-width="5.2" fill="none" transform="translate(-1.5 2)"/>
<path d="M679.4 369 C681.2 369.8 687 368.5 690.4 374 C693.8 379.5 697.1 394.3 700 402 C702.9 409.7 703.4 411.6 708 420 C712.6 428.4 721 443.6 727.5 452.6 C734 461.6 740.5 467.8 747 473.8 C753.5 479.8 758.4 484.1 766.6 488.5 C774.8 492.9 787.1 497.8 796 500 C804.9 502.2 811.9 502.2 820 502 C828.1 501.8 837.6 500.3 844.4 499 C851.2 497.7 853.9 497.8 860.7 494 C867.5 490.2 878.4 482.3 885.2 476 C892 469.7 898.8 459.6 901.5 456.3" stroke="#17173a" stroke-width="4" fill="none"/>
<path d="M406.6 369 C407.9 371.3 413.3 374.8 414.4 383 C415.5 391.2 415.2 409.1 413 418 C410.8 426.9 406.6 430.8 401 436.3 C395.4 441.8 386.5 446.4 379.7 451 C372.9 455.6 366 458.8 360 464 C354 469.2 348.4 475.7 343.8 482 C339.2 488.3 335.9 495.6 332.4 501.6 C328.9 507.6 327 511.5 322.6 517.9 C318.2 524.3 313.8 533.1 306.3 540 C298.8 546.9 286.9 553.4 277.8 559 C268.7 564.6 260.2 566.8 251.7 573.8 C243.2 580.8 231.1 596.5 227 601" stroke="#c7b5a1" stroke-width="5.2" fill="none" transform="translate(1.5 2)"/>
<path d="M406.6 369 C407.9 371.3 413.3 374.8 414.4 383 C415.5 391.2 415.2 409.1 413 418 C410.8 426.9 406.6 430.8 401 436.3 C395.4 441.8 386.5 446.4 379.7 451 C372.9 455.6 366 458.8 360 464 C354 469.2 348.4 475.7 343.8 482 C339.2 488.3 335.9 495.6 332.4 501.6 C328.9 507.6 327 511.5 322.6 517.9 C318.2 524.3 313.8 533.1 306.3 540 C298.8 546.9 286.9 553.4 277.8 559 C268.7 564.6 260.2 566.8 251.7 573.8 C243.2 580.8 231.1 596.5 227 601" stroke="#17173a" stroke-width="4" fill="none"/>
<path d="M679.4 369 C678.1 371.3 672.7 374.8 671.6 383 C670.5 391.2 670.8 409.1 673 418 C675.2 426.9 679.5 430.8 685 436.3 C690.5 441.8 699.5 446.4 706.3 451 C713.1 455.6 720 458.8 726 464 C732 469.2 737.6 475.7 742.2 482 C746.8 488.3 750.1 495.6 753.6 501.6 C757.1 507.6 759 511.5 763.4 517.9 C767.8 524.3 772.2 533.1 779.7 540 C787.2 546.9 799.1 553.4 808.2 559 C817.3 564.6 825.8 566.8 834.3 573.8 C842.8 580.8 854.9 596.5 859 601" stroke="#c7b5a1" stroke-width="5.2" fill="none" transform="translate(-1.5 2)"/>
<path d="M679.4 369 C678.1 371.3 672.7 374.8 671.6 383 C670.5 391.2 670.8 409.1 673 418 C675.2 426.9 679.5 430.8 685 436.3 C690.5 441.8 699.5 446.4 706.3 451 C713.1 455.6 720 458.8 726 464 C732 469.2 737.6 475.7 742.2 482 C746.8 488.3 750.1 495.6 753.6 501.6 C757.1 507.6 759 511.5 763.4 517.9 C767.8 524.3 772.2 533.1 779.7 540 C787.2 546.9 799.1 553.4 808.2 559 C817.3 564.6 825.8 566.8 834.3 573.8 C842.8 580.8 854.9 596.5 859 601" stroke="#17173a" stroke-width="4" fill="none"/>
<path d="M184.5 456.3 C185.6 459.6 188 470.6 191 476 C194 481.4 199.9 486.3 202.4 489 C204.9 491.7 205.4 491.5 206 492" stroke="#c7b5a1" stroke-width="5.2" fill="none" transform="translate(1.5 2)"/>
<path d="M184.5 456.3 C185.6 459.6 188 470.6 191 476 C194 481.4 199.9 486.3 202.4 489 C204.9 491.7 205.4 491.5 206 492" stroke="#17173a" stroke-width="4" fill="none"/>
<path d="M901.5 456.3 C900.4 459.6 898 470.6 895 476 C892 481.4 886.1 486.3 883.6 489 C881.1 491.7 880.6 491.5 880 492" stroke="#c7b5a1" stroke-width="5.2" fill="none" transform="translate(-1.5 2)"/>
<path d="M901.5 456.3 C900.4 459.6 898 470.6 895 476 C892 481.4 886.1 486.3 883.6 489 C881.1 491.7 880.6 491.5 880 492" stroke="#17173a" stroke-width="4" fill="none"/>
<path d="M173 474.3 C174.1 475.9 176.3 481.3 179.6 484 C182.9 486.7 187.7 488.9 192.6 490.6 C197.5 492.3 200.8 492.5 209 494 C217.2 495.5 236.2 498.6 241.6 499.5" stroke="#c7b5a1" stroke-width="5.2" fill="none" transform="translate(1.5 2)"/>
<path d="M173 474.3 C174.1 475.9 176.3 481.3 179.6 484 C182.9 486.7 187.7 488.9 192.6 490.6 C197.5 492.3 200.8 492.5 209 494 C217.2 495.5 236.2 498.6 241.6 499.5" stroke="#17173a" stroke-width="4" fill="none"/>
<path d="M913 474.3 C911.9 475.9 909.7 481.3 906.4 484 C903.1 486.7 898.3 488.9 893.4 490.6 C888.5 492.3 885.2 492.5 877 494 C868.8 495.5 849.8 498.6 844.4 499.5" stroke="#c7b5a1" stroke-width="5.2" fill="none" transform="translate(-1.5 2)"/>
<path d="M913 474.3 C911.9 475.9 909.7 481.3 906.4 484 C903.1 486.7 898.3 488.9 893.4 490.6 C888.5 492.3 885.2 492.5 877 494 C868.8 495.5 849.8 498.6 844.4 499.5" stroke="#17173a" stroke-width="4" fill="none"/>
<path d="M173 474.3 C174.4 476.8 177.6 484.6 181.2 489 C184.8 493.4 192.1 498.5 194.3 500.4" stroke="#c7b5a1" stroke-width="5.2" fill="none" transform="translate(1.5 2)"/>
<path d="M173 474.3 C174.4 476.8 177.6 484.6 181.2 489 C184.8 493.4 192.1 498.5 194.3 500.4" stroke="#17173a" stroke-width="4" fill="none"/>
<path d="M913 474.3 C911.6 476.8 908.3 484.6 904.8 489 C901.2 493.4 893.9 498.5 891.7 500.4" stroke="#c7b5a1" stroke-width="5.2" fill="none" transform="translate(-1.5 2)"/>
<path d="M913 474.3 C911.6 476.8 908.3 484.6 904.8 489 C901.2 493.4 893.9 498.5 891.7 500.4" stroke="#17173a" stroke-width="4" fill="none"/>
<path d="M170.6 498.7 C174.3 499.5 183.5 502.5 192.6 503.6 C201.7 504.7 216.1 505 225.3 505.3 C234.5 505.6 241.5 504.5 248 505.3 C254.5 506.1 261.7 509.2 264.4 510" stroke="#c7b5a1" stroke-width="5.2" fill="none" transform="translate(1.5 2)"/>
<path d="M170.6 498.7 C174.3 499.5 183.5 502.5 192.6 503.6 C201.7 504.7 216.1 505 225.3 505.3 C234.5 505.6 241.5 504.5 248 505.3 C254.5 506.1 261.7 509.2 264.4 510" stroke="#17173a" stroke-width="4" fill="none"/>
<path d="M915.4 498.7 C911.7 499.5 902.5 502.5 893.4 503.6 C884.3 504.7 869.9 505 860.7 505.3 C851.5 505.6 844.5 504.5 838 505.3 C831.5 506.1 824.3 509.2 821.6 510" stroke="#c7b5a1" stroke-width="5.2" fill="none" transform="translate(-1.5 2)"/>
<path d="M915.4 498.7 C911.7 499.5 902.5 502.5 893.4 503.6 C884.3 504.7 869.9 505 860.7 505.3 C851.5 505.6 844.5 504.5 838 505.3 C831.5 506.1 824.3 509.2 821.6 510" stroke="#17173a" stroke-width="4" fill="none"/>
<path d="M170.6 498.7 C171.8 500.6 174.3 506.4 178 510 C181.7 513.5 186.1 517.4 192.6 520 C199.1 522.6 207.5 524.9 217 525.6 C226.5 526.3 240.7 523.3 249.7 524 C258.7 524.7 266.6 526.9 271 529.7 C275.4 532.5 276.9 537.5 275.8 541 C274.7 544.5 269 547.5 264.4 551 C259.8 554.5 252.4 557.5 248 562 C243.6 566.5 241.5 571.5 238 578 C234.5 584.5 228.8 597.2 227 601" stroke="#c7b5a1" stroke-width="5.2" fill="none" transform="translate(1.5 2)"/>
<path d="M170.6 498.7 C171.8 500.6 174.3 506.4 178 510 C181.7 513.5 186.1 517.4 192.6 520 C199.1 522.6 207.5 524.9 217 525.6 C226.5 526.3 240.7 523.3 249.7 524 C258.7 524.7 266.6 526.9 271 529.7 C275.4 532.5 276.9 537.5 275.8 541 C274.7 544.5 269 547.5 264.4 551 C259.8 554.5 252.4 557.5 248 562 C243.6 566.5 241.5 571.5 238 578 C234.5 584.5 228.8 597.2 227 601" stroke="#17173a" stroke-width="4" fill="none"/>
<path d="M915.4 498.7 C914.2 500.6 911.7 506.4 908 510 C904.3 513.5 899.9 517.4 893.4 520 C886.9 522.6 878.5 524.9 869 525.6 C859.5 526.3 845.3 523.3 836.3 524 C827.3 524.7 819.4 526.9 815 529.7 C810.6 532.5 809.1 537.5 810.2 541 C811.3 544.5 817 547.5 821.6 551 C826.2 554.5 833.6 557.5 838 562 C842.4 566.5 844.5 571.5 848 578 C851.5 584.5 857.2 597.2 859 601" stroke="#c7b5a1" stroke-width="5.2" fill="none" transform="translate(-1.5 2)"/>
<path d="M915.4 498.7 C914.2 500.6 911.7 506.4 908 510 C904.3 513.5 899.9 517.4 893.4 520 C886.9 522.6 878.5 524.9 869 525.6 C859.5 526.3 845.3 523.3 836.3 524 C827.3 524.7 819.4 526.9 815 529.7 C810.6 532.5 809.1 537.5 810.2 541 C811.3 544.5 817 547.5 821.6 551 C826.2 554.5 833.6 557.5 838 562 C842.4 566.5 844.5 571.5 848 578 C851.5 584.5 857.2 597.2 859 601" stroke="#17173a" stroke-width="4" fill="none"/>
<path d="M277.7 583.4 C279.6 585.3 284.1 592 289.2 594.9 C294.3 597.8 300.7 599.7 308.3 600.7 C315.9 601.7 328.8 599.4 335 600.7 C341.2 602 343.8 604.5 345.7 608.3 C347.6 612.1 348.7 618.8 346.6 623.6 C344.5 628.4 338.6 631.9 333.2 637 C327.8 642.1 319.1 647.6 314 654.3 C308.9 661 305.2 669.6 302.6 677.3 C300.1 685 299 694.2 298.7 700.3 C298.4 706.4 300.4 711.7 300.7 714" stroke="#c7b5a1" stroke-width="5.2" fill="none" transform="translate(1.5 2)"/>
<path d="M277.7 583.4 C279.6 585.3 284.1 592 289.2 594.9 C294.3 597.8 300.7 599.7 308.3 600.7 C315.9 601.7 328.8 599.4 335 600.7 C341.2 602 343.8 604.5 345.7 608.3 C347.6 612.1 348.7 618.8 346.6 623.6 C344.5 628.4 338.6 631.9 333.2 637 C327.8 642.1 319.1 647.6 314 654.3 C308.9 661 305.2 669.6 302.6 677.3 C300.1 685 299 694.2 298.7 700.3 C298.4 706.4 300.4 711.7 300.7 714" stroke="#17173a" stroke-width="4" fill="none"/>
<path d="M808.3 583.4 C806.4 585.3 801.9 592 796.8 594.9 C791.7 597.8 785.3 599.7 777.7 600.7 C770.1 601.7 757.2 599.4 751 600.7 C744.8 602 742.2 604.5 740.3 608.3 C738.4 612.1 737.3 618.8 739.4 623.6 C741.5 628.4 747.4 631.9 752.8 637 C758.2 642.1 766.9 647.6 772 654.3 C777.1 661 780.9 669.6 783.4 677.3 C785.9 685 787 694.2 787.3 700.3 C787.6 706.4 785.6 711.7 785.3 714" stroke="#c7b5a1" stroke-width="5.2" fill="none" transform="translate(-1.5 2)"/>
<path d="M808.3 583.4 C806.4 585.3 801.9 592 796.8 594.9 C791.7 597.8 785.3 599.7 777.7 600.7 C770.1 601.7 757.2 599.4 751 600.7 C744.8 602 742.2 604.5 740.3 608.3 C738.4 612.1 737.3 618.8 739.4 623.6 C741.5 628.4 747.4 631.9 752.8 637 C758.2 642.1 766.9 647.6 772 654.3 C777.1 661 780.9 669.6 783.4 677.3 C785.9 685 787 694.2 787.3 700.3 C787.6 706.4 785.6 711.7 785.3 714" stroke="#17173a" stroke-width="4" fill="none"/>
<path d="M475 565 C469.6 568.4 452.3 580.3 442.4 585.3 C432.5 590.3 422 591.7 415.6 594.9 C409.2 598.1 407.2 599.1 404 604.5 C400.8 609.9 399.6 621.8 396.4 627.5 C393.2 633.2 388.8 635.2 385 639 C381.2 642.8 376.3 645.4 373.4 650.5 C370.5 655.6 369.3 663.2 367.7 669.6 C366.1 676 365.2 681.4 363.9 688.8 C362.6 696.2 360.6 709.8 360 714" stroke="#c7b5a1" stroke-width="5.2" fill="none" transform="translate(1.5 2)"/>
<path d="M475 565 C469.6 568.4 452.3 580.3 442.4 585.3 C432.5 590.3 422 591.7 415.6 594.9 C409.2 598.1 407.2 599.1 404 604.5 C400.8 609.9 399.6 621.8 396.4 627.5 C393.2 633.2 388.8 635.2 385 639 C381.2 642.8 376.3 645.4 373.4 650.5 C370.5 655.6 369.3 663.2 367.7 669.6 C366.1 676 365.2 681.4 363.9 688.8 C362.6 696.2 360.6 709.8 360 714" stroke="#17173a" stroke-width="4" fill="none"/>
<path d="M611 565 C616.4 568.4 633.7 580.3 643.6 585.3 C653.5 590.3 664 591.7 670.4 594.9 C676.8 598.1 678.8 599.1 682 604.5 C685.2 609.9 686.4 621.8 689.6 627.5 C692.8 633.2 697.2 635.2 701 639 C704.8 642.8 709.7 645.4 712.6 650.5 C715.5 655.6 716.7 663.2 718.3 669.6 C719.9 676 720.8 681.4 722.1 688.8 C723.4 696.2 725.4 709.8 726 714" stroke="#c7b5a1" stroke-width="5.2" fill="none" transform="translate(-1.5 2)"/>
<path d="M611 565 C616.4 568.4 633.7 580.3 643.6 585.3 C653.5 590.3 664 591.7 670.4 594.9 C676.8 598.1 678.8 599.1 682 604.5 C685.2 609.9 686.4 621.8 689.6 627.5 C692.8 633.2 697.2 635.2 701 639 C704.8 642.8 709.7 645.4 712.6 650.5 C715.5 655.6 716.7 663.2 718.3 669.6 C719.9 676 720.8 681.4 722.1 688.8 C723.4 696.2 725.4 709.8 726 714" stroke="#17173a" stroke-width="4" fill="none"/>
<path d="M348.5 636 C347.2 638.4 345 643.6 340.9 650.5 C336.8 657.4 329 668.4 323.6 677.3 C318.2 686.2 311.4 697.9 308.3 704 C305.2 710.1 305.6 712.3 305 714" stroke="#c7b5a1" stroke-width="5.2" fill="none" transform="translate(1.5 2)"/>
<path d="M348.5 636 C347.2 638.4 345 643.6 340.9 650.5 C336.8 657.4 329 668.4 323.6 677.3 C318.2 686.2 311.4 697.9 308.3 704 C305.2 710.1 305.6 712.3 305 714" stroke="#17173a" stroke-width="4" fill="none"/>
<path d="M737.5 636 C738.8 638.4 741 643.6 745.1 650.5 C749.2 657.4 757 668.4 762.4 677.3 C767.8 686.2 774.6 697.9 777.7 704 C780.8 710.1 780.5 712.3 781 714" stroke="#c7b5a1" stroke-width="5.2" fill="none" transform="translate(-1.5 2)"/>
<path d="M737.5 636 C738.8 638.4 741 643.6 745.1 650.5 C749.2 657.4 757 668.4 762.4 677.3 C767.8 686.2 774.6 697.9 777.7 704 C780.8 710.1 780.5 712.3 781 714" stroke="#17173a" stroke-width="4" fill="none"/>
<path d="M348.5 636 C347.2 642.6 342.2 662.4 340.9 675.4 C339.6 688.4 340.9 707.6 340.9 714" stroke="#c7b5a1" stroke-width="5.2" fill="none" transform="translate(1.5 2)"/>
<path d="M348.5 636 C347.2 642.6 342.2 662.4 340.9 675.4 C339.6 688.4 340.9 707.6 340.9 714" stroke="#17173a" stroke-width="4" fill="none"/>
<path d="M737.5 636 C738.8 642.6 743.8 662.4 745.1 675.4 C746.4 688.4 745.1 707.6 745.1 714" stroke="#c7b5a1" stroke-width="5.2" fill="none" transform="translate(-1.5 2)"/>
<path d="M737.5 636 C738.8 642.6 743.8 662.4 745.1 675.4 C746.4 688.4 745.1 707.6 745.1 714" stroke="#17173a" stroke-width="4" fill="none"/>
<path d="M362 646.6 C360.7 651.7 356.2 666.1 354.3 677.3 C352.4 688.5 351.1 707.9 350.5 714" stroke="#c7b5a1" stroke-width="5.2" fill="none" transform="translate(1.5 2)"/>
<path d="M362 646.6 C360.7 651.7 356.2 666.1 354.3 677.3 C352.4 688.5 351.1 707.9 350.5 714" stroke="#17173a" stroke-width="4" fill="none"/>
<path d="M724 646.6 C725.3 651.7 729.8 666.1 731.7 677.3 C733.6 688.5 734.9 707.9 735.5 714" stroke="#c7b5a1" stroke-width="5.2" fill="none" transform="translate(-1.5 2)"/>
<path d="M724 646.6 C725.3 651.7 729.8 666.1 731.7 677.3 C733.6 688.5 734.9 707.9 735.5 714" stroke="#17173a" stroke-width="4" fill="none"/>
<path d="M354.3 611.2 C356.2 612 361.4 616.5 365.8 616 C370.2 615.5 378.5 609.6 381 608.3" stroke="#c7b5a1" stroke-width="3.7" fill="none" transform="translate(1.5 2)"/>
<path d="M354.3 611.2 C356.2 612 361.4 616.5 365.8 616 C370.2 615.5 378.5 609.6 381 608.3" stroke="#17173a" stroke-width="2.5" fill="none"/>
<path d="M731.7 611.2 C729.8 612 724.7 616.5 720.2 616 C715.8 615.5 707.5 609.6 705 608.3" stroke="#c7b5a1" stroke-width="3.7" fill="none" transform="translate(-1.5 2)"/>
<path d="M731.7 611.2 C729.8 612 724.7 616.5 720.2 616 C715.8 615.5 707.5 609.6 705 608.3" stroke="#17173a" stroke-width="2.5" fill="none"/>
<path d="M518.7 150 C520.8 151.2 526.3 172.3 527.7 178.7 C529.1 185.1 531 200.7 530.3 204.5 C529.6 208.3 523.6 211.3 521.3 211 C519 210.7 512.8 204.9 511 202 C509.2 199.1 506 190.3 505.8 186.4 C505.6 182.5 508.2 172.6 509.7 168.4 C511.2 164.2 516.6 148.8 518.7 150Z" stroke="#c7b5a1" stroke-width="2.6" fill="none" transform="translate(1 1.5)"/>
<path d="M518.7 150 C520.8 151.2 526.3 172.3 527.7 178.7 C529.1 185.1 531 200.7 530.3 204.5 C529.6 208.3 523.6 211.3 521.3 211 C519 210.7 512.8 204.9 511 202 C509.2 199.1 506 190.3 505.8 186.4 C505.6 182.5 508.2 172.6 509.7 168.4 C511.2 164.2 516.6 148.8 518.7 150Z" stroke="#17173a" stroke-width="2.6" fill="#fff"/>
<path d="M566.3 150 C564.2 151.2 558.7 172.3 557.3 178.7 C555.9 185.1 554 200.7 554.7 204.5 C555.4 208.3 561.4 211.3 563.7 211 C566 210.7 572.2 204.9 574 202 C575.8 199.1 579 190.3 579.2 186.4 C579.4 182.5 576.8 172.6 575.3 168.4 C573.8 164.2 568.4 148.8 566.3 150Z" stroke="#c7b5a1" stroke-width="2.6" fill="none" transform="translate(1 1.5)"/>
<path d="M566.3 150 C564.2 151.2 558.7 172.3 557.3 178.7 C555.9 185.1 554 200.7 554.7 204.5 C555.4 208.3 561.4 211.3 563.7 211 C566 210.7 572.2 204.9 574 202 C575.8 199.1 579 190.3 579.2 186.4 C579.4 182.5 576.8 172.6 575.3 168.4 C573.8 164.2 568.4 148.8 566.3 150Z" stroke="#17173a" stroke-width="2.6" fill="#fff"/>
<path d="M485.2 195.5 C486.7 194.3 499.4 204.4 503 207 C506.6 209.6 513.8 213.6 516 217.4 C518.2 221.2 522.1 236.7 522 240 C521.9 243.3 517.1 246.3 514.8 245.8 C512.5 245.3 504.9 238.7 502 235.4 C499.1 232.1 492.3 222.1 490.3 217.4 C488.3 212.7 483.7 196.7 485.2 195.5Z" stroke="#c7b5a1" stroke-width="2.6" fill="none" transform="translate(1 1.5)"/>
<path d="M485.2 195.5 C486.7 194.3 499.4 204.4 503 207 C506.6 209.6 513.8 213.6 516 217.4 C518.2 221.2 522.1 236.7 522 240 C521.9 243.3 517.1 246.3 514.8 245.8 C512.5 245.3 504.9 238.7 502 235.4 C499.1 232.1 492.3 222.1 490.3 217.4 C488.3 212.7 483.7 196.7 485.2 195.5Z" stroke="#17173a" stroke-width="2.6" fill="#fff"/>
<path d="M599.8 195.5 C598.3 194.3 585.6 204.4 582 207 C578.4 209.6 571.2 213.6 569 217.4 C566.8 221.2 562.9 236.7 563 240 C563.1 243.3 567.9 246.3 570.2 245.8 C572.5 245.3 580.1 238.7 583 235.4 C585.9 232.1 592.7 222.1 594.7 217.4 C596.7 212.7 601.3 196.7 599.8 195.5Z" stroke="#c7b5a1" stroke-width="2.6" fill="none" transform="translate(1 1.5)"/>
<path d="M599.8 195.5 C598.3 194.3 585.6 204.4 582 207 C578.4 209.6 571.2 213.6 569 217.4 C566.8 221.2 562.9 236.7 563 240 C563.1 243.3 567.9 246.3 570.2 245.8 C572.5 245.3 580.1 238.7 583 235.4 C585.9 232.1 592.7 222.1 594.7 217.4 C596.7 212.7 601.3 196.7 599.8 195.5Z" stroke="#17173a" stroke-width="2.6" fill="#fff"/>
<path d="M491.6 251 C492.5 250.1 505.1 259 508.4 261 C511.7 263 517.8 264.6 520 268 C522.2 271.4 526.4 287.2 527 290 C527.6 292.8 526.3 292.5 525 292 C523.7 291.5 518.8 288.4 516 285.7 C513.2 283 503.4 273 500.6 269 C497.8 265 490.7 251.9 491.6 251Z" stroke="#c7b5a1" stroke-width="2.6" fill="none" transform="translate(1 1.5)"/>
<path d="M491.6 251 C492.5 250.1 505.1 259 508.4 261 C511.7 263 517.8 264.6 520 268 C522.2 271.4 526.4 287.2 527 290 C527.6 292.8 526.3 292.5 525 292 C523.7 291.5 518.8 288.4 516 285.7 C513.2 283 503.4 273 500.6 269 C497.8 265 490.7 251.9 491.6 251Z" stroke="#17173a" stroke-width="2.6" fill="#fff"/>
<path d="M593.4 251 C592.5 250.1 579.9 259 576.6 261 C573.3 263 567.2 264.6 565 268 C562.8 271.4 558.6 287.2 558 290 C557.4 292.8 558.7 292.5 560 292 C561.3 291.5 566.2 288.4 569 285.7 C571.8 283 581.6 273 584.4 269 C587.2 265 594.3 251.9 593.4 251Z" stroke="#c7b5a1" stroke-width="2.6" fill="none" transform="translate(1 1.5)"/>
<path d="M593.4 251 C592.5 250.1 579.9 259 576.6 261 C573.3 263 567.2 264.6 565 268 C562.8 271.4 558.6 287.2 558 290 C557.4 292.8 558.7 292.5 560 292 C561.3 291.5 566.2 288.4 569 285.7 C571.8 283 581.6 273 584.4 269 C587.2 265 594.3 251.9 593.4 251Z" stroke="#17173a" stroke-width="2.6" fill="#fff"/>
<path d="M519.1 207.4 L532.4 204.7 L534.1 210 L549.1 210 L551.8 204.7 L565 207.4 L565.9 218 L563.2 225.9 L565.9 232.9 L565 240.9 L566.8 249.7 L565.9 256.8 L561.5 265.6 L563.2 272.6 L561.5 283.2 L556.2 293.8 L554.4 300.9 L552.6 309.7 L549.1 316.8 L543.8 320.3 L540.3 320.3 L535 316.8 L531.5 309.7 L528.8 300.9 L526.2 293.8 L520.9 283.2 L519.1 272.6 L520.9 265.6 L516.5 256.8 L515.6 249.7 L517.4 240.9 L516.5 232.9 L519.1 225.9 L517.4 218Z" stroke="#c7b5a1" stroke-width="2.4" fill="none" transform="translate(1 1.5)"/>
<path d="M519.1 207.4 L532.4 204.7 L534.1 210 L549.1 210 L551.8 204.7 L565 207.4 L565.9 218 L563.2 225.9 L565.9 232.9 L565 240.9 L566.8 249.7 L565.9 256.8 L561.5 265.6 L563.2 272.6 L561.5 283.2 L556.2 293.8 L554.4 300.9 L552.6 309.7 L549.1 316.8 L543.8 320.3 L540.3 320.3 L535 316.8 L531.5 309.7 L528.8 300.9 L526.2 293.8 L520.9 283.2 L519.1 272.6 L520.9 265.6 L516.5 256.8 L515.6 249.7 L517.4 240.9 L516.5 232.9 L519.1 225.9 L517.4 218Z" stroke="#17173a" stroke-width="2.4" fill="#fff"/>
<path d="M531.5 269 C533.2 271.1 538.5 281.5 542 281.5 C545.5 281.5 550.8 271.1 552.6 269" stroke="#17173a" stroke-width="1.6" fill="none"/>
<path d="M522.6 246 C523.5 247.5 526.3 252.3 528 255 C529.7 257.7 532.4 259.7 533 262 C533.6 264.3 531.8 267.8 531.5 269" stroke="#17173a" stroke-width="1.6" fill="none"/>
<path d="M561.5 246 C560.6 247.5 557.8 252.3 556 255 C554.2 257.7 551.6 259.7 551 262 C550.4 264.3 552.3 267.8 552.6 269" stroke="#17173a" stroke-width="1.6" fill="none"/>
<path d="M523 270 C524.2 272.5 527.8 280 530 285 C532.2 290 534.2 296.7 536 300 C537.8 303.3 540.2 304.2 541 305" stroke="#17173a" stroke-width="1.6" fill="none"/>
<path d="M561 270 C559.8 272.5 556.2 280 554 285 C551.8 290 549.8 296.7 548 300 C546.2 303.3 543.8 304.2 543 305" stroke="#17173a" stroke-width="1.6" fill="none"/>
<path d="M521 226 C522.2 225.3 525.7 222 528 222 C530.3 222 533.8 225.3 535 226" stroke="#17173a" stroke-width="1.6" fill="none"/>
<path d="M563 226 C561.8 225.3 558.3 222 556 222 C553.7 222 550.2 225.3 549 226" stroke="#17173a" stroke-width="1.6" fill="none"/>
<path d="M531 238 C532.7 236 537.3 226 541 226 C544.7 226 551 236 553 238" stroke="#17173a" stroke-width="1.6" fill="none"/>
<path d="M524 232 C525 234.3 529.7 242 530 246 C530.3 250 526.7 254.3 526 256" stroke="#c7b5a1" stroke-width="1.5" fill="none"/>
<path d="M560 232 C559 234.3 554.3 242 554 246 C553.7 250 557.3 254.3 558 256" stroke="#c7b5a1" stroke-width="1.5" fill="none"/>
<path d="M526 286 L534 296" stroke="#c7b5a1" stroke-width="1.5" fill="none"/>
<path d="M558 286 L550 296" stroke="#c7b5a1" stroke-width="1.5" fill="none"/>
<ellipse cx="528" cy="223" rx="6" ry="3" stroke="#17173a" stroke-width="1.3" fill="none"/>
<ellipse cx="556" cy="223" rx="6" ry="3" stroke="#17173a" stroke-width="1.3" fill="none"/>
<circle cx="537.6" cy="235" r="6.5" stroke="#17173a" stroke-width="2" fill="#fff"/>
<circle cx="546.5" cy="235" r="6.5" stroke="#17173a" stroke-width="2" fill="#fff"/>
<circle cx="542" cy="311" r="5" stroke="#17173a" stroke-width="1.6" fill="none"/>
<ellipse cx="541.2" cy="294" rx="1.8" ry="3" stroke="#17173a" stroke-width="1.2" fill="none"/>
<path d="M862.5 471.3 C868.4 471.6 880.8 472.4 887.3 474.8 C893.8 477.2 898.5 480.2 901.5 485.5 C904.5 490.8 903.2 500.8 905 506.7 C906.8 512.6 906.5 518.6 912 521 C917.5 523.4 925.3 522 937.8 521 C950.2 520 972.8 515.8 986.7 514.7 C1000.6 513.7 1012.9 511 1021 514.7 C1029.2 518.4 1032.8 528.7 1035.6 536.7 C1038.4 544.8 1042 555.5 1038 563 C1034 570.5 1020.2 576.7 1011.5 581.8 C1002.8 586.9 991.1 585.7 986 593.4 C980.9 601.1 985.7 616 981 628 C976.3 640 967.7 656.9 958 665.5 C948.3 674.1 932.7 676.7 923 679.4 C913.3 682.1 910.5 680.8 900 681.7 C889.5 682.6 868.1 684.8 860 685 C851.9 685.2 855.6 685.3 851.2 683.2 C846.8 681.1 837.9 677.9 833.5 672.5 C829.1 667.1 826.7 658.1 824.6 651 C822.5 643.9 823.4 633.6 821 629.8 C818.6 626 815.6 627.4 810.3 628 C805 628.6 793.5 629.6 789 633.4 C784.5 637.2 785.4 645.1 783.6 651 C781.8 656.9 781.3 664.2 778.3 669 C775.3 673.8 770.5 677.5 765.8 679.6 C761 681.7 754.8 682.6 749.8 681.4 C744.8 680.2 739.4 677.6 735.6 672.5 C731.8 667.4 727.8 658.9 727 651 C726.2 643.1 729 633.8 731 625 C733 616.2 740.3 605.5 739 598 C737.7 590.5 725.5 586.9 723 580 C720.5 573.1 721.6 564.5 724.2 556.4 C726.8 548.3 731.9 539 738.4 531.6 C744.9 524.2 753.2 518 763.2 512.1 C773.2 506.2 788.1 500.5 798.7 496.1 C809.3 491.7 818.1 489.4 827 485.5 C835.9 481.6 845.9 475.4 851.8 473 C857.7 470.6 856.6 471 862.5 471.3Z" stroke="#f65b57" stroke-width="2" fill="#f65b57"/>
<path d="M750.3 573.3 C755.5 569.1 761.2 560.2 768.6 552.8 C776 545.3 780.4 541.6 787.3 536.2 C794.2 530.8 799.5 530 803 525.7 C806.6 521.5 806.8 517.7 805.1 515.2 C803.4 512.6 800 511.2 794.6 513.1 C789.1 514.9 784.9 518.3 777.7 524.4 C770.5 530.4 765.6 534.9 758.4 543.2 C751.1 551.6 744.6 559.9 741.3 566.1 C738.1 572.3 740.4 572.7 742.2 574.2 C743.9 575.6 745 577.6 750.3 573.3Z" stroke="none" stroke-width="0" fill="#000"/>
<path d="M791.6 516.9 C787.3 524 785.3 532.8 779.7 547.7 C774 562.5 768.7 575.9 763.3 591.2 C758 606.6 756.4 611.6 752.9 624.4 C749.4 637.2 746.3 647.3 745.8 655.2 C745.4 663 748.1 663 750.8 663.8 C753.5 664.5 755.8 665.7 759.4 658.8 C762.9 651.9 764.6 641.5 768.7 629.2 C772.8 616.9 774.5 612.3 780.1 597.2 C785.6 582.1 791.2 568.8 796.3 553.7 C801.5 538.7 805 530.2 806 521.9 C807 513.6 804.2 513.2 801.3 512.2 C798.4 511.2 795.9 509.8 791.6 516.9Z" stroke="none" stroke-width="0" fill="#000"/>
<path d="M791.4 570.4 C797.6 566.8 804.6 559.2 811.8 552.6 C819 546.1 820.2 544.8 827.5 537.7 C834.8 530.6 840 525.1 848.1 517.3 C856.3 509.4 864 504.2 868.3 498.5 C872.6 492.8 871.3 490.9 869.5 488.7 C867.8 486.5 866.5 484.7 859.7 487.5 C853 490.3 845.3 495.8 835.9 502.7 C826.4 509.7 820 515 812.5 522.3 C805 529.6 804.6 531.9 798.2 539.4 C791.8 546.8 784.1 553.4 780.6 559.6 C777.1 565.8 778.5 568.2 780.6 570.4 C782.8 572.5 785.2 573.9 791.4 570.4Z" stroke="none" stroke-width="0" fill="#000"/>
<path d="M798.8 558.3 C801.6 559.4 803.1 557.8 805.6 558 C808.1 558.2 810.4 560.2 811.3 559.5 C812.2 558.7 812.1 551.1 810 554.1 C807.8 557.1 805.2 563.9 800.5 574.5 C795.9 585.1 788.8 598.7 786.7 607 C784.6 615.4 787.5 615.1 790 616.3 C792.6 617.5 794.2 619.9 799.3 613 C804.4 606 810.1 592.5 815.5 581.5 C820.8 570.5 825.8 564.9 826 557.9 C826.3 550.9 820.6 549.3 816.7 546.5 C812.8 543.8 810.3 544.2 806.4 544 C802.5 543.8 800.2 543.9 797.2 545.7 C794.3 547.4 791.4 550.3 791.7 552.8 C792 555.3 796 557.3 798.8 558.3Z" stroke="none" stroke-width="0" fill="#000"/>
<path d="M817.3 596.5 C823.4 592.3 828.4 586.8 837.9 576.1 C847.3 565.4 854.2 555.4 864.6 542.9 C875.1 530.5 885 521.6 890 513.9 C895.1 506.1 891.9 505.9 889.9 504 C887.8 502 887.7 498.7 880 504.1 C872.3 509.6 862.7 519.1 851.4 531.1 C840 543 832.3 552.6 823.3 563.9 C814.4 575.2 809.8 580.8 806.7 587.5 C803.5 594.2 805.3 595.5 807.5 597.3 C809.6 599.2 811.3 600.8 817.3 596.5Z" stroke="none" stroke-width="0" fill="#000"/>
<path d="M851.4 562.5 C854.4 561.6 856.1 555.9 858.4 556.4 C860.7 556.9 858.9 564.7 863 565.1 C867 565.5 874.4 561.7 878.7 558.4 C882.9 555.1 883.5 552.1 884.1 548.6 C884.7 545.1 883.7 541.9 881.6 540.9 C879.6 539.8 876 541.6 873.9 543.4 C871.7 545.2 872.6 547.9 870.9 550 C869.2 552.1 867.7 554.9 865.4 553.9 C863.2 552.9 863.7 545.2 859.6 545 C855.6 544.8 848.4 549.7 845.2 552.9 C841.9 556.1 842.2 558.9 843.5 560.8 C844.7 562.8 848.5 563.4 851.4 562.5Z" stroke="none" stroke-width="0" fill="#000"/>
<path d="M881 551.6 C894.1 552.2 917.3 549.6 938.6 547.8 C959.9 546.1 973 544.8 987.6 543 C1002.2 541.2 1005.6 541.2 1011.7 538.8 C1017.8 536.4 1018.2 533.9 1018 531.1 C1017.7 528.3 1016.7 526 1010.3 524.8 C1003.9 523.7 1000.5 524.3 985.8 525.4 C971.2 526.4 958.2 528 937 530.2 C915.7 532.4 892.5 533.5 879.6 536.4 C866.8 539.3 872.4 541.6 872.7 544.7 C873 547.7 867.8 551 881 551.6Z" stroke="none" stroke-width="0" fill="#000"/>
<path d="M824.6 602.6 C834.4 600.9 847.8 593.6 863.2 589.2 C878.6 584.9 886.4 583.6 901.7 580.7 C916.9 577.8 922.1 578 939.4 574.7 C956.7 571.4 971.2 567.9 988.2 564.3 C1005.3 560.7 1016.1 560 1024.6 556.9 C1033 553.8 1030.8 551.6 1030.3 548.8 C1029.8 546.1 1031.3 543.2 1022.2 543.1 C1013.2 542.9 1002.4 545.3 985.2 548.1 C968 550.9 953.6 554.2 936.2 557.3 C918.8 560.3 913.9 560.3 898.3 563.3 C882.7 566.3 874.1 567.4 858.2 572.2 C842.3 576.9 827.8 582 819 587 C810.2 592.1 812.9 594.5 814 597.6 C815.2 600.7 814.8 604.2 824.6 602.6Z" stroke="none" stroke-width="0" fill="#000"/>
<path d="M939.6 542.8 C933.4 545.3 924.9 551.2 916.4 556.7 C908 562.3 901.4 566.1 897.3 570.6 C893.1 575.2 894.3 577.5 895.8 579.5 C897.3 581.6 899.2 583.4 904.7 581 C910.3 578.5 915.4 573 923.6 567.3 C931.8 561.6 941 557.1 945.8 552.6 C950.6 548 948.8 546.6 947.6 544.6 C946.3 542.7 945.9 540.4 939.6 542.8Z" stroke="none" stroke-width="0" fill="#000"/>
<ellipse cx="902" cy="622" rx="63" ry="41" transform="rotate(-14 902 622)" stroke="#000" stroke-width="14" fill="none"/>
<path d="M747.7 571.3 C752.1 567.1 758.7 558.1 766.2 550.6 C773.7 543 778.3 539.2 785.3 533.7 C792.3 528.2 797.8 526.4 801.2 523 C804.7 519.7 803.4 518.4 802.4 517 C801.5 515.5 800.9 513.8 796.4 515.8 C791.8 517.7 786.9 521 779.7 526.9 C772.6 532.8 767.9 537.2 760.8 545.4 C753.6 553.7 747.2 562.9 743.9 568.1 C740.6 573.4 743.4 571 744.2 571.6 C745 572.3 743.3 575.5 747.7 571.3Z" stroke="none" stroke-width="0" fill="#f7f23b"/>
<path d="M794.7 518 C791.2 524.7 788.4 533.9 782.7 548.8 C777.1 563.7 771.7 577 766.4 592.3 C761.1 607.6 759.5 612.6 756 625.3 C752.5 638.1 749.9 649 749 656 C748.1 663.1 750.2 660.2 751.6 660.6 C753.1 661 753.4 664.5 756.2 658 C759 651.5 761.4 640.6 765.6 628.3 C769.7 615.9 771.5 611.2 777 596.1 C782.5 581 788.1 567.7 793.3 552.6 C798.5 537.6 801.5 528.3 802.9 520.8 C804.3 513.4 801.9 515.8 800.2 515.3 C798.6 514.7 798.2 511.3 794.7 518Z" stroke="none" stroke-width="0" fill="#f7f23b"/>
<path d="M789.1 568.1 C794.4 564.5 802.3 556.9 809.5 550.4 C816.7 543.8 817.9 542.5 825.2 535.4 C832.5 528.3 837.8 522.7 846 514.8 C854.2 506.9 862.1 500.8 866.3 496 C870.5 491.2 867.9 491.9 867 490.7 C866.1 489.5 867.5 487.1 861.7 490 C855.9 492.9 847.4 498.3 838 505.2 C828.6 512.1 822.3 517.3 814.8 524.6 C807.3 531.9 806.9 534.2 800.5 541.6 C794.1 549.1 786.4 556.6 782.9 561.9 C779.4 567.2 781.7 566.9 782.9 568.1 C784.1 569.3 783.8 571.6 789.1 568.1Z" stroke="none" stroke-width="0" fill="#f7f23b"/>
<path d="M798.4 555.1 C800.6 555.6 802.9 554.5 805.8 554.7 C808.6 555 811.1 556.4 812.6 556.5 C814 556.5 815 550.9 813.1 554.8 C811.3 558.7 808.2 565.2 803.5 575.9 C798.8 586.6 792 600.9 789.6 608.4 C787.2 615.9 790.1 612.8 791.4 613.4 C792.8 614 792.2 618.3 796.4 611.6 C800.6 604.9 807.2 591 812.5 580.1 C817.8 569.2 822.3 563.3 822.9 557.2 C823.4 551.1 818.8 551.5 815.4 549.5 C812.1 547.6 809.8 547.4 806.2 547.3 C802.7 547.1 799.9 547.9 797.6 548.9 C795.3 549.9 794.7 551.1 794.9 552.4 C795.1 553.6 796.2 554.6 798.4 555.1Z" stroke="none" stroke-width="0" fill="#f7f23b"/>
<path d="M814.9 594.4 C820 590.3 825.9 584.7 835.4 574 C844.9 563.3 851.7 553.2 862.2 540.7 C872.7 528.3 882.6 518.5 887.7 511.6 C892.8 504.7 888.7 507.3 887.6 506.3 C886.5 505.3 889.1 501 882.3 506.4 C875.5 511.8 865.1 521.3 853.8 533.3 C842.5 545.2 834.7 554.7 825.8 566 C816.9 577.3 812.4 583.8 809.1 589.6 C805.9 595.4 808.4 593.9 809.6 594.9 C810.7 595.8 809.7 598.6 814.9 594.4Z" stroke="none" stroke-width="0" fill="#f7f23b"/>
<path d="M849.7 559.8 C852.2 558.6 855.9 552.8 858.7 553.2 C861.5 553.6 860.1 561.4 863.7 561.9 C867.2 562.5 873 559 876.5 556 C880 553.1 880.5 549.6 881.2 547.1 C882 544.7 881 544.2 880.1 543.8 C879.2 543.3 878.2 543.1 876.8 544.9 C875.4 546.6 875.5 549.9 873.1 552.4 C870.7 554.8 867.5 557.9 864.7 557.1 C862 556.2 862.8 548.5 859.3 548.2 C855.7 547.9 849.5 553.4 846.9 555.6 C844.3 557.8 845.7 558.2 846.2 559.1 C846.8 559.9 847.2 561 849.7 559.8Z" stroke="none" stroke-width="0" fill="#f7f23b"/>
<path d="M880.7 548.4 C893.2 548.4 917 546.3 938.3 544.6 C959.6 542.9 972.6 541.6 987.3 539.8 C1001.9 538 1005.9 537.2 1011.4 535.5 C1016.9 533.9 1014.9 532.9 1014.7 531.4 C1014.6 529.9 1016.3 528.6 1010.6 528.1 C1004.9 527.5 1000.8 527.5 986.1 528.6 C971.5 529.7 958.5 531.2 937.3 533.4 C916 535.6 892.2 537.4 879.9 539.6 C867.7 541.8 875.8 542.6 875.9 544.4 C876.1 546.1 868.2 548.3 880.7 548.4Z" stroke="none" stroke-width="0" fill="#f7f23b"/>
<path d="M823.5 599.5 C832.5 597.4 846.8 590.5 862.3 586.1 C877.8 581.7 885.7 580.4 901.1 577.5 C916.4 574.6 921.5 574.8 938.8 571.5 C956.1 568.3 970.6 564.7 987.6 561.1 C1004.7 557.5 1016.1 556 1024 553.7 C1031.9 551.3 1027.3 550.9 1027.1 549.4 C1026.8 547.9 1031 545.9 1022.8 546.3 C1014.5 546.7 1003 548.5 985.8 551.3 C968.6 554.1 954.2 557.4 936.8 560.5 C919.4 563.5 914.5 563.5 898.9 566.5 C883.4 569.4 874.9 570.6 859.1 575.3 C843.4 580 828.5 585.9 820.1 590.1 C811.7 594.3 816.4 594.6 817.1 596.5 C817.8 598.4 814.5 601.6 823.5 599.5Z" stroke="none" stroke-width="0" fill="#f7f23b"/>
<path d="M941.4 545.6 C936.1 548.2 926.7 553.9 918.3 559.4 C909.8 564.9 903.1 569.6 899.2 573.3 C895.2 576.9 897.7 576.6 898.5 577.6 C899.2 578.6 898.2 580.9 902.8 578.3 C907.5 575.7 913.5 570.3 921.7 564.6 C930 558.9 939.4 553.5 944 549.8 C948.6 546.2 945.3 547.2 944.8 546.4 C944.3 545.5 946.7 543 941.4 545.6Z" stroke="none" stroke-width="0" fill="#f7f23b"/>
<ellipse cx="902" cy="622" rx="63" ry="41" transform="rotate(-14 902 622)" stroke="#f7f23b" stroke-width="7" fill="none"/>
<path d="M867 620 C870.8 619.5 882 617.3 890 617 C898 616.7 907 617.5 915 618 C923 618.5 934.2 619.7 938 620" stroke="#111" stroke-width="1.8" fill="none"/>
<path d="M885 604 C886.3 602.8 890.8 597 893 597 C895.2 597 899.5 600.5 898 604 C896.5 607.5 884 616 884 618 C884 620 895.7 616.3 898 616" stroke="#111" stroke-width="1.8" fill="none"/>
<path d="M900 604 C901 603 904.8 597 906 598 C907.2 599 907.8 607.7 907 610 C906.2 612.3 902.2 613 901 612 C899.8 611 900.2 605.3 900 604" stroke="#111" stroke-width="1.8" fill="none"/>
<path d="M910 600 C910.3 599.3 911.5 593 912 596 C912.5 599 912.8 614.3 913 618" stroke="#111" stroke-width="1.8" fill="none"/>
<path d="M925 590 C923.5 592.3 917.2 599 916 604 C914.8 609 916.3 617.3 918 620 C919.7 622.7 924 621.7 926 620 C928 618.3 931 612 930 610 C929 608 921.7 608.3 920 608" stroke="#111" stroke-width="1.8" fill="none"/>
</svg>
</div>
<div class="a" style="left:1061px;top:83px;width:16px;height:644px;background:#484848"></div>
<svg class="i" style="left:1064px;top:90px" width="10" height="6"><path d="M0.5 5.5 L5 1 L9.5 5.5" stroke="#9a9a9a" stroke-width="1.2" fill="none"/></svg>
<div class="a" style="left:1063px;top:303px;width:12px;height:132px;background:#5e5e5e"></div>
<svg class="i" style="left:1064px;top:698px" width="10" height="6"><path d="M0.5 0.5 L5 5 L9.5 0.5" stroke="#9a9a9a" stroke-width="1.2" fill="none"/></svg>
<!-- status bar -->
<div class="a" style="left:41px;top:711px;width:1020px;height:16px;background:#535353"></div>
<div class="t" style="left:51px;top:712px;font-size:10.5px;line-height:13px;color:#dedede">27.2%</div>
<div class="a" style="left:86px;top:712px;width:1px;height:14px;background:#474747"></div>
<svg class="i" style="left:92px;top:713px" width="13" height="11"><path d="M1 3 L1 10 L11 10 L11 7" stroke="#cfcfcf" stroke-width="1.4" fill="none"/><path d="M4 8 C4 5 6 4 9 4 L9 1.5 L12.5 5 L9 8.5 L9 6 C7 6 5.5 6.5 4 8Z" fill="#cfcfcf"/></svg>
<div class="t" style="left:148px;top:712px;font-size:10.5px;line-height:13px;color:#c8c8c8">Doc: 158.6M/293.0M</div>
<svg class="i" style="left:282px;top:714px" width="6" height="10"><path d="M0.5 0.5 L5 5 L0.5 9.5" stroke="#bdbdbd" stroke-width="1.2" fill="none"/></svg>
<div class="a" style="left:291px;top:711px;width:770px;height:16px;background:#484848"></div>
<svg class="i" style="left:300px;top:715px" width="6" height="9"><path d="M5 0.5 L1 4.5 L5 8.5" stroke="#8a8a8a" stroke-width="1.1" fill="none"/></svg>
<div class="a" style="left:587px;top:714px;width:182px;height:10px;background:#5f5f5f"></div>
<div class="a" style="left:1061px;top:711px;width:16px;height:16px;background:#535353"></div>
<svg class="i" style="left:1047px;top:715px" width="6" height="9"><path d="M1 0.5 L5 4.5 L1 8.5" stroke="#8a8a8a" stroke-width="1.1" fill="none"/></svg>

<!-- ================= RIGHT DOCK ================= -->
<div class="a" style="left:1077px;top:62px;width:283px;height:665px;background:#3d3d3d"></div>
<div class="a" style="left:1080px;top:63px;width:37px;height:11px;background:#454545"></div>
<svg class="i" style="left:1094px;top:66px" width="10" height="6"><path d="M3 0 L0 3 L3 6 Z M8 0 L5 3 L8 6Z" fill="#ccc"/></svg>
<div class="a" style="left:1080px;top:74px;width:37px;height:653px;background:#535353"></div>
<div class="a" style="left:1080px;top:115px;width:37px;height:1px;background:#3d3d3d"></div>
<div class="a" style="left:1080px;top:156px;width:37px;height:1px;background:#3d3d3d"></div>
<div class="a" style="left:1080px;top:197px;width:37px;height:1px;background:#3d3d3d"></div>
<div class="grip" style="left:1089px;top:78px;width:19px;height:4px"></div>
<div class="grip" style="left:1089px;top:119px;width:19px;height:4px"></div>
<div class="grip" style="left:1089px;top:160px;width:19px;height:4px"></div>
<svg class="i" style="left:1092px;top:90px" width="16" height="18"><rect x="0.5" y="0.5" width="3.5" height="3.5" stroke="#ddd" fill="none"/><rect x="0.5" y="6.5" width="3.5" height="3.5" stroke="#ddd" fill="none"/><rect x="0" y="12" width="4.5" height="4.5" fill="#ddd"/><path d="M9 6 L12 2 L13 7 M12 3 C15 5 15 11 10 14" stroke="#ddd" stroke-width="1.4" fill="none"/></svg>
<svg class="i" style="left:1091px;top:131px" width="18" height="16"><path d="M1 3 L5 1 L9 3 L9 8 L5 10 L1 8 Z M1 3 L5 5 L9 3 M5 5 L5 10" stroke="#ddd" stroke-width="1" fill="#bbb"/><rect x="11" y="1" width="5" height="4" fill="#ddd"/><rect x="11" y="6" width="5" height="4" fill="#ddd"/><rect x="1" y="12" width="15" height="3" fill="#ddd"/></svg>
<svg class="i" style="left:1090px;top:170px" width="20" height="20"><path d="M1 1 L7 1 L17 13 L17 19 L11 19 L1 7 Z M1 7 L7 7 L7 1 M11 13 L17 13 M11 13 L11 19" stroke="#ddd" stroke-width="1.2" fill="none"/></svg>
<div class="a" style="left:1120px;top:63px;width:240px;height:11px;background:#454545"></div>
<svg class="i" style="left:1334px;top:66px" width="10" height="6"><path d="M0 0 L3 3 L0 6 Z M5 0 L8 3 L5 6Z" fill="#ccc"/></svg>

<!-- Color panel -->
<div class="a" style="left:1120px;top:74px;width:240px;height:188px;background:#535353"></div>
<div class="a" style="left:1160px;top:74px;width:200px;height:18px;background:#424242"></div>
<div class="a" style="left:1160px;top:74px;width:59px;height:18px;background:#474747;border-right:1px solid #3a3a3a;border-left:1px solid #3a3a3a"></div>
<div class="ptab" style="left:1127px;top:77px;color:#f0f0f0">Color</div>
<div class="ptab" style="left:1167px;top:77px">Swatches</div>
<div class="ham" style="left:1342px;top:79px"></div>
<div class="a" style="left:1140px;top:112px;width:19px;height:19px;background:#fff;border:1px solid #2a2a2a"></div>
<div class="a" style="left:1128px;top:101px;width:22px;height:22px;background:#6a6a6a;padding:1px"><div style="width:20px;height:20px;background:#111;padding:2px"><div style="width:16px;height:16px;background:#bb3f9b;border:1px solid #fff"></div></div></div>
<div class="a" style="left:1165px;top:99px;width:142px;height:157px;background:linear-gradient(to bottom,rgba(0,0,0,0),#000),linear-gradient(to right,#fff,#ff0fb0);border:1px solid #333"></div>
<div class="a" style="left:1251px;top:135px;width:11px;height:11px;border:1.3px solid #fff;border-radius:50%"></div>
<div class="a" style="left:1323px;top:99px;width:20px;height:157px;border:1px solid #333;background:linear-gradient(to bottom,#f00 0%,#f0f 17%,#00f 33%,#0ff 50%,#0f0 67%,#ff0 83%,#f00 100%)"></div>
<svg class="i" style="left:1313px;top:108px" width="9" height="10"><path d="M0.5 1 L5 1 L8.5 5 L5 9 L0.5 9 Z" fill="#e6e6e6"/></svg>

<!-- Libraries panel -->
<div class="a" style="left:1120px;top:265px;width:240px;height:196px;background:#535353"></div>
<div class="a" style="left:1174px;top:265px;width:186px;height:17px;background:#424242"></div>
<div class="a" style="left:1174px;top:265px;width:74px;height:17px;background:#474747;border-left:1px solid #3a3a3a;border-right:1px solid #3a3a3a"></div>
<div class="a" style="left:1248px;top:265px;width:42px;height:17px;background:#474747;border-right:1px solid #3a3a3a"></div>
<div class="ptab" style="left:1126px;top:267px;color:#f0f0f0">Libraries</div>
<div class="ptab" style="left:1181px;top:267px">Adjustments</div>
<div class="ptab" style="left:1255px;top:267px">Styles</div>
<div class="ham" style="left:1342px;top:269px"></div>
<div class="dd" style="left:1129px;top:290px;width:165px;height:19px;background:#454545;border-radius:3px"></div>
<div class="t" style="left:1139px;top:293px;font-size:11.5px;line-height:13px;color:#f0f0f0">My Library</div>
<div class="chev" style="left:1281px;top:295px"></div>
<div class="a" style="left:1303px;top:289px;width:21px;height:22px;background:#3c3c3c;border-radius:3px"></div>
<svg class="i" style="left:1307px;top:294px" width="13" height="13"><rect x="0" y="0" width="6" height="6" fill="#e8e8e8"/><rect x="7" y="0" width="6" height="6" fill="#e8e8e8"/><rect x="0" y="7" width="6" height="6" fill="#e8e8e8"/><rect x="7" y="7" width="6" height="6" fill="#e8e8e8"/></svg>
<svg class="i" style="left:1332px;top:293px" width="13" height="13"><path d="M0 1.5 H12 M0 4.5 H12 M0 7.5 H12 M0 10.5 H12" stroke="#e8e8e8" stroke-width="1.6"/></svg>
<svg class="i" style="left:1127px;top:322px" width="12" height="12"><circle cx="7.5" cy="4.5" r="3.5" stroke="#c8c8c8" stroke-width="1.5" fill="none"/><path d="M5 7 L1 11" stroke="#c8c8c8" stroke-width="2.2"/></svg>
<div class="t" style="left:1148px;top:321px;font-size:11px;line-height:13px;color:#7b7b7b">Search Adobe Stock</div>
<div class="chev" style="left:1340px;top:323px"></div>
<div class="a" style="left:1128px;top:338px;width:222px;height:1px;background:#6a6a6a"></div>
<div class="a" style="left:1120px;top:344px;width:240px;height:1px;background:#424242"></div>
<div class="a" style="left:1120px;top:345px;width:240px;height:92px;background:#4b4b4b"></div>
<div class="t" style="left:1151px;top:358px;font-size:14px;line-height:16px;font-weight:bold;color:#f2f2f2">Your Content. Anywhere.</div>
<div class="a" style="left:1135px;top:385px;width:198px;height:52px;background:#5e5e5e;border-radius:3px 3px 0 0;overflow:hidden">
<div class="t" style="left:0;width:198px;top:11px;text-align:center;font-size:10.5px;line-height:15px;color:#dcdcdc">Use Libraries to organize, access,<br>and share your assets across<br>desktop and mobile.</div></div>
<div class="a" style="left:1344px;top:345px;width:16px;height:92px;background:#4b4b4b"></div>
<svg class="i" style="left:1347px;top:353px" width="10" height="6"><path d="M0.5 5.5 L5 1 L9.5 5.5" stroke="#8a8a8a" stroke-width="1.1" fill="none"/></svg>
<div class="a" style="left:1345px;top:362px;width:12px;height:18px;background:#666"></div>
<svg class="i" style="left:1347px;top:424px" width="10" height="6"><path d="M0.5 0.5 L5 5 L9.5 0.5" stroke="#8a8a8a" stroke-width="1.1" fill="none"/></svg>
<div class="a" style="left:1120px;top:437px;width:240px;height:24px;background:#535353;border-top:1px solid #484848"></div>
<svg class="i" style="left:1130px;top:441px" width="14" height="15"><path d="M7 0 L13 6 L9.5 6 L9.5 9 L4.5 9 L4.5 6 L1 6 Z" fill="#e0e0e0"/><path d="M0 11 H14 M0 14 H14" stroke="#e0e0e0" stroke-width="1.3"/></svg>
<svg class="i" style="left:1154px;top:441px" width="18" height="15"><path d="M1 12 L9 2 L9 12 Z" stroke="#ddd" stroke-width="1.3" fill="none"/><rect x="9" y="7" width="6" height="6" fill="#ddd"/><circle cx="9" cy="12" r="3" stroke="#ddd" stroke-width="1.3" fill="#535353"/></svg>
<div class="t" style="left:1180px;top:440px;font-size:16px;line-height:18px;color:#858585">A</div>
<div class="t" style="left:1204px;top:440px;font-size:15px;line-height:18px;color:#858585;font-style:italic;font-family:'Liberation Serif'">fx</div>
<div class="a" style="left:1230px;top:443px;width:14px;height:14px;background:#bb3f9b;border:1px solid #eee"></div>
<svg class="i" style="left:1299px;top:442px" width="18" height="13"><path d="M6 2 C1 2 0 10 5 11 L13 11 C17 11 18 5 13 4 C11 0 6 1 5 6 C4 9 8 10 10 8" stroke="#ddd" stroke-width="1.6" fill="none"/></svg>
<svg class="i" style="left:1325px;top:442px" width="12" height="15"><path d="M1 3 H11 M4 3 V1 H8 V3 M2 4 L2.5 14 H9.5 L10 4 M4.5 6 V12 M7.5 6 V12" stroke="#9a9a9a" stroke-width="1.2" fill="none"/></svg>

<!-- Layers panel -->
<div class="a" style="left:1120px;top:464px;width:240px;height:263px;background:#535353"></div>
<div class="a" style="left:1163px;top:464px;width:197px;height:17px;background:#424242"></div>
<div class="a" style="left:1163px;top:464px;width:56px;height:17px;background:#474747;border-left:1px solid #3a3a3a;border-right:1px solid #3a3a3a"></div>
<div class="a" style="left:1219px;top:464px;width:41px;height:17px;background:#474747;border-right:1px solid #3a3a3a"></div>
<div class="ptab" style="left:1127px;top:466px;color:#f0f0f0">Layers</div>
<div class="ptab" style="left:1170px;top:466px">Channels</div>
<div class="ptab" style="left:1227px;top:466px">Paths</div>
<div class="ham" style="left:1342px;top:468px"></div>
<div class="dd" style="left:1124px;top:489px;width:89px;height:19px"></div>
<svg class="i" style="left:1130px;top:493px" width="11" height="11"><circle cx="6.5" cy="4" r="3.2" stroke="#ddd" stroke-width="1.4" fill="none"/><path d="M4.5 6.5 L1 10" stroke="#ddd" stroke-width="2"/></svg>
<div class="t" style="left:1146px;top:492px;font-size:11px;line-height:13px;color:#ececec">Kind</div>
<div class="chev" style="left:1201px;top:494px"></div>
<svg class="i" style="left:1224px;top:493px" width="12" height="10"><rect x="0.5" y="0.5" width="11" height="9" stroke="#ddd" fill="none"/><path d="M2 8 L5 4 L7 6 L8 5 L10 8Z" fill="#ddd"/></svg>
<svg class="i" style="left:1249px;top:492px" width="12" height="12"><circle cx="6" cy="6" r="5" stroke="#ddd" stroke-width="1.4" fill="none"/><path d="M2.5 9.5 L9.5 2.5 A5 5 0 0 1 2.5 9.5Z" fill="#ddd"/></svg>
<div class="t" style="left:1272px;top:491px;font-size:13px;line-height:14px;color:#ddd;font-weight:bold;font-family:'Liberation Serif'">T</div>
<svg class="i" style="left:1296px;top:492px" width="12" height="12"><rect x="1.5" y="1.5" width="9" height="9" stroke="#ddd" fill="none"/><rect x="0" y="0" width="3" height="3" fill="#ddd"/><rect x="9" y="0" width="3" height="3" fill="#ddd"/><rect x="0" y="9" width="3" height="3" fill="#ddd"/><rect x="9" y="9" width="3" height="3" fill="#ddd"/></svg>
<svg class="i" style="left:1320px;top:491px" width="12" height="14"><path d="M4 1 L9 1 L11 3 L11 11 L6 11" stroke="#ddd" stroke-width="1.2" fill="none"/><rect x="0.5" y="6" width="6" height="7" fill="#ddd"/></svg>
<div class="a" style="left:1343px;top:490px;width:10px;height:18px;border-radius:5px;background:#3d3d3d;border:1px solid #2f2f2f"></div>
<div class="a" style="left:1343px;top:489px;width:10px;height:10px;border-radius:50%;background:#e2e2e2"></div>
<div class="a" style="left:1120px;top:512px;width:240px;height:1px;background:#494949"></div>
<div class="dd" style="left:1124px;top:516px;width:131px;height:18px"></div>
<div class="t" style="left:1131px;top:519px;font-size:10.5px;line-height:12px;color:#ececec">Normal</div>
<div class="chev" style="left:1242px;top:520px"></div>
<div class="lbl" style="left:1262px;top:520px">Opacity:</div>
<div class="t" style="left:1307px;top:519px;font-size:10.5px;line-height:12px;color:#ececec">100%</div>
<div class="a" style="left:1302px;top:534px;width:53px;height:1px;background:#6a6a6a"></div>
<div class="chev" style="left:1345px;top:521px"></div>
<div class="a" style="left:1120px;top:539px;width:240px;height:1px;background:#494949"></div>
<div class="lbl" style="left:1126px;top:547px">Lock:</div>
<svg class="i" style="left:1158px;top:546px" width="12" height="12"><rect x="0.5" y="0.5" width="11" height="11" stroke="#ddd" fill="none"/><path d="M1 1 h3 v3 h-3z M7 1 h3 v3 h-3z M4 4 h3 v3 h-3z M1 7 h3 v3 h-3z M7 7 h3 v3 h-3z" fill="#ddd"/></svg>
<svg class="i" style="left:1180px;top:545px" width="14" height="14"><path d="M13 1 L6 9 L5 8 Z" fill="#ddd"/><path d="M4.5 8.5 C2 9 2 12 0 13.5 C3 14 6 12 6 10Z" fill="#ddd"/></svg>
<svg class="i" style="left:1201px;top:545px" width="14" height="14"><path d="M7 0 V14 M0 7 H14 M7 0 L5 2.5 H9Z M7 14 L5 11.5 H9Z M0 7 L2.5 5 V9Z M14 7 L11.5 5 V9Z" stroke="#ddd" stroke-width="1.3" fill="#ddd"/></svg>
<svg class="i" style="left:1224px;top:545px" width="14" height="14"><path d="M3 1 V11 H13 M1 3 H11 V13" stroke="#ddd" stroke-width="1.3" fill="none"/></svg>
<svg class="i" style="left:1247px;top:545px" width="11" height="13"><path d="M2.5 6 V3.5 A3 3 0 0 1 8.5 3.5 V6" stroke="#ddd" stroke-width="1.6" fill="none"/><rect x="0.5" y="6" width="10" height="7" fill="#ddd"/></svg>
<div class="lbl" style="left:1284px;top:547px">Fill:</div>
<div class="t" style="left:1307px;top:546px;font-size:10.5px;line-height:12px;color:#ececec">100%</div>
<div class="a" style="left:1302px;top:561px;width:53px;height:1px;background:#6a6a6a"></div>
<div class="chev" style="left:1345px;top:548px"></div>
<div class="a" style="left:1120px;top:566px;width:225px;height:1px;background:#3f3f3f"></div>

<div class="row" style="top:567px;background:#686868"><div class="eyec"></div><div class="eye"></div><div class="thumb" style="border-color:#ddd;outline:1px solid #222"></div><div class="lname">Layer 16</div></div>
<div class="row" style="top:600px"><div class="eyec"></div><div class="eye"></div><div class="thumb"></div><div class="lname">Layer 16 copy 2</div></div>
<div class="row" style="top:633px"><div class="eyec"></div><div class="eye"></div><div class="thumb"></div><div class="lname">Layer 16 copy</div></div>
<div class="row" style="top:666px"><div class="eyec"></div><div class="eye"></div><div class="thumb"></div><div class="lname">Group 4 copy 2</div></div>
<div class="a" style="left:1173px;top:583px;width:4px;height:3px;background:#d33"></div><div class="a" style="left:1175px;top:583px;width:3px;height:3px;background:#222"></div>
<div class="a" style="left:1167px;top:690px;width:2px;height:2px;background:#3a9a6a"></div>
<div class="a" style="left:1164px;top:683px;width:2px;height:2px;background:#3a9a6a"></div>
<div class="a" style="left:1175px;top:690px;width:2px;height:2px;background:#c03b8f"></div>
<div class="a" style="left:1179px;top:672px;width:2px;height:2px;background:#d24a8a"></div>
<div class="a" style="left:1168px;top:689px;width:2px;height:2px;background:#2a8a5a"></div>
<div class="a" style="left:1166px;top:687px;width:2px;height:2px;background:#3a9a6a"></div>
<div class="a" style="left:1177px;top:687px;width:2px;height:2px;background:#d24a8a"></div>
<div class="a" style="left:1180px;top:676px;width:2px;height:2px;background:#2a8a5a"></div>
<div class="a" style="left:1180px;top:676px;width:2px;height:2px;background:#3a9a6a"></div>
<div class="a" style="left:1172px;top:672px;width:2px;height:2px;background:#a06030"></div>
<div class="a" style="left:1184px;top:674px;width:2px;height:2px;background:#2a8a5a"></div>
<div class="a" style="left:1184px;top:690px;width:2px;height:2px;background:#c03b8f"></div>
<div class="a" style="left:1169px;top:672px;width:2px;height:2px;background:#8a5a2a"></div>
<div class="a" style="left:1175px;top:691px;width:2px;height:2px;background:#a06030"></div>
<div class="a" style="left:1172px;top:685px;width:2px;height:2px;background:#d24a8a"></div>
<div class="a" style="left:1183px;top:690px;width:2px;height:2px;background:#d24a8a"></div>
<div class="a" style="left:1164px;top:683px;width:2px;height:2px;background:#c03b8f"></div>
<div class="a" style="left:1161px;top:676px;width:2px;height:2px;background:#d24a8a"></div>
<div class="a" style="left:1166px;top:680px;width:2px;height:2px;background:#a06030"></div>
<div class="a" style="left:1173px;top:681px;width:2px;height:2px;background:#d24a8a"></div>
<div class="a" style="left:1176px;top:684px;width:2px;height:2px;background:#3a9a6a"></div>
<div class="a" style="left:1171px;top:689px;width:2px;height:2px;background:#3a9a6a"></div>
<div class="a" style="left:1166px;top:646px;width:2px;height:2px;background:#333"></div>
<div class="a" style="left:1174px;top:650px;width:2px;height:2px;background:#333"></div>
<div class="a" style="left:1170px;top:655px;width:2px;height:2px;background:#333"></div>
<div class="a" style="left:1345px;top:567px;width:15px;height:132px;background:#4b4b4b"></div>
<svg class="i" style="left:1347px;top:576px" width="10" height="6"><path d="M0.5 5.5 L5 1 L9.5 5.5" stroke="#8a8a8a" stroke-width="1.1" fill="none"/></svg>
<div class="a" style="left:1346px;top:585px;width:12px;height:50px;background:#666"></div>
<svg class="i" style="left:1347px;top:688px" width="10" height="6"><path d="M0.5 0.5 L5 5 L9.5 0.5" stroke="#8a8a8a" stroke-width="1.1" fill="none"/></svg>
<div class="a" style="left:1120px;top:699px;width:240px;height:28px;background:#535353;border-top:1px solid #454545"></div>
<svg class="i" style="left:1155px;top:710px" width="16" height="9"><path d="M6 1 H4 A3.5 3.5 0 0 0 4 8 H6 M10 1 H12 A3.5 3.5 0 0 1 12 8 H10 M5 4.5 H11" stroke="#8a8a8a" stroke-width="1.4" fill="none"/></svg>
<div class="t" style="left:1183px;top:706px;font-size:14px;line-height:16px;color:#ddd;font-style:italic;font-family:'Liberation Serif'">fx</div>
<div class="a" style="left:1209px;top:708px;width:14px;height:11px;background:#ddd;border-radius:2px"></div>
<div class="a" style="left:1212px;top:710px;width:8px;height:7px;background:#535353;border-radius:50%"></div>
<svg class="i" style="left:1238px;top:707px" width="13" height="13"><circle cx="6.5" cy="6.5" r="5.5" stroke="#ddd" stroke-width="1.4" fill="none"/><path d="M2.6 10.4 L10.4 2.6 A5.5 5.5 0 0 1 2.6 10.4Z" fill="#ddd"/></svg>
<svg class="i" style="left:1264px;top:707px" width="15" height="12"><path d="M0 1 H6 L7 3 H15 V12 H0Z" fill="#ddd"/></svg>
<svg class="i" style="left:1291px;top:707px" width="13" height="13"><path d="M4 1 H12 V12 H1 V4 Z M1 4 H4 V1" stroke="#ddd" stroke-width="1.3" fill="none"/></svg>
<svg class="i" style="left:1318px;top:706px" width="13" height="15"><path d="M1 3 H12 M4.5 3 V1 H8.5 V3 M2 4 L2.5 14 H10.5 L11 4 M5 6 V12 M8 6 V12" stroke="#ddd" stroke-width="1.3" fill="none"/></svg>
<div class="tri" style="left:1203px;top:722px"></div>
<div class="tri" style="left:1258px;top:722px"></div>

<!-- ================= <div class="a" style="left:79px;top:728px;width:58px;height:9px;background:rgba(235,230,200,0.35);border:1px solid rgba(255,255,240,0.6);border-bottom:none"></div>
<div class="a" style="left:141px;top:728px;width:58px;height:9px;background:rgba(235,230,200,0.35);border:1px solid rgba(255,255,240,0.6);border-bottom:none"></div>
<div class="a" style="left:203px;top:728px;width:58px;height:9px;background:rgba(235,230,200,0.35);border:1px solid rgba(255,255,240,0.6);border-bottom:none"></div>
<div class="a" style="left:265px;top:728px;width:58px;height:9px;background:rgba(235,230,200,0.35);border:1px solid rgba(255,255,240,0.6);border-bottom:none"></div>
<div class="a" style="left:513px;top:728px;width:40px;height:9px;background:rgba(235,230,200,0.35);border:1px solid rgba(255,255,240,0.6);border-bottom:none"></div>
<div class="a" style="left:827px;top:728px;width:58px;height:9px;background:rgba(235,230,200,0.35);border:1px solid rgba(255,255,240,0.6);border-bottom:none"></div>
<div class="a" style="left:97px;top:731px;width:22px;height:5px;background:#e2554b;border-radius:11px 11px 0 0"></div>
<div class="a" style="left:152px;top:731px;width:28px;height:5px;background:#2aa7e0;border-radius:14px 14px 0 0"></div>
<div class="a" style="left:216px;top:731px;width:22px;height:5px;background:#2aa7e0;border-radius:11px 11px 0 0"></div>
<div class="a" style="left:278px;top:731px;width:22px;height:5px;background:#e55e6e;border-radius:11px 11px 0 0"></div>
<div class="a" style="left:395px;top:731px;width:3px;height:5px;background:#e07b20"></div>
<div class="a" style="left:410px;top:732px;width:24px;height:4px;background:#202a36;border-radius:12px 12px 0 0"></div>
<div class="a" style="left:455px;top:733px;width:22px;height:3px;background:#111;border-radius:11px 11px 0 0"></div>
<div class="a" style="left:527px;top:731px;width:26px;height:5px;background:#1ea0e8;border:1px solid #111"></div>
<div class="a" style="left:590px;top:731px;width:26px;height:5px;background:#18c3b0;border:1px solid #111"></div>
<div class="a" style="left:652px;top:731px;width:26px;height:5px;background:#b35ad8;border:1px solid #111"></div>
<div class="a" style="left:713px;top:731px;width:26px;height:5px;background:#e04a20;border:1px solid #111"></div>
<div class="a" style="left:775px;top:731px;width:30px;height:5px;background:#2fb86a;border-radius:15px 15px 0 0"></div>
<div class="a" style="left:893px;top:731px;width:28px;height:5px;background:#000;border-radius:3px 3px 0 0"></div>
<div class="a" style="left:959px;top:731px;width:32px;height:5px;background:#f09a10;border:1px solid #7a4a00"></div> ================= -->
<div class="a" style="left:0;top:727px;width:1360px;height:9px;background:linear-gradient(90deg,#b6ab6c 0%,#bcb274 20%,#a89e5c 40%,#bfb57a 60%,#b3a868 80%,#c2b67a 100%)"></div>
<div class="a" style="left:79px;top:728px;width:58px;height:9px;background:rgba(235,230,200,0.35);border:1px solid rgba(255,255,240,0.6);border-bottom:none"></div>
<div class="a" style="left:141px;top:728px;width:58px;height:9px;background:rgba(235,230,200,0.35);border:1px solid rgba(255,255,240,0.6);border-bottom:none"></div>
<div class="a" style="left:203px;top:728px;width:58px;height:9px;background:rgba(235,230,200,0.35);border:1px solid rgba(255,255,240,0.6);border-bottom:none"></div>
<div class="a" style="left:265px;top:728px;width:58px;height:9px;background:rgba(235,230,200,0.35);border:1px solid rgba(255,255,240,0.6);border-bottom:none"></div>
<div class="a" style="left:513px;top:728px;width:40px;height:9px;background:rgba(235,230,200,0.35);border:1px solid rgba(255,255,240,0.6);border-bottom:none"></div>
<div class="a" style="left:827px;top:728px;width:58px;height:9px;background:rgba(235,230,200,0.35);border:1px solid rgba(255,255,240,0.6);border-bottom:none"></div>
<div class="a" style="left:97px;top:731px;width:22px;height:5px;background:#e2554b;border-radius:11px 11px 0 0"></div>
<div class="a" style="left:152px;top:731px;width:28px;height:5px;background:#2aa7e0;border-radius:14px 14px 0 0"></div>
<div class="a" style="left:216px;top:731px;width:22px;height:5px;background:#2aa7e0;border-radius:11px 11px 0 0"></div>
<div class="a" style="left:278px;top:731px;width:22px;height:5px;background:#e55e6e;border-radius:11px 11px 0 0"></div>
<div class="a" style="left:395px;top:731px;width:3px;height:5px;background:#e07b20"></div>
<div class="a" style="left:410px;top:732px;width:24px;height:4px;background:#202a36;border-radius:12px 12px 0 0"></div>
<div class="a" style="left:455px;top:733px;width:22px;height:3px;background:#111;border-radius:11px 11px 0 0"></div>
<div class="a" style="left:527px;top:731px;width:26px;height:5px;background:#1ea0e8;border:1px solid #111"></div>
<div class="a" style="left:590px;top:731px;width:26px;height:5px;background:#18c3b0;border:1px solid #111"></div>
<div class="a" style="left:652px;top:731px;width:26px;height:5px;background:#b35ad8;border:1px solid #111"></div>
<div class="a" style="left:713px;top:731px;width:26px;height:5px;background:#e04a20;border:1px solid #111"></div>
<div class="a" style="left:775px;top:731px;width:30px;height:5px;background:#2fb86a;border-radius:15px 15px 0 0"></div>
<div class="a" style="left:893px;top:731px;width:28px;height:5px;background:#000;border-radius:3px 3px 0 0"></div>
<div class="a" style="left:959px;top:731px;width:32px;height:5px;background:#f09a10;border:1px solid #7a4a00"></div>

</body></html>
